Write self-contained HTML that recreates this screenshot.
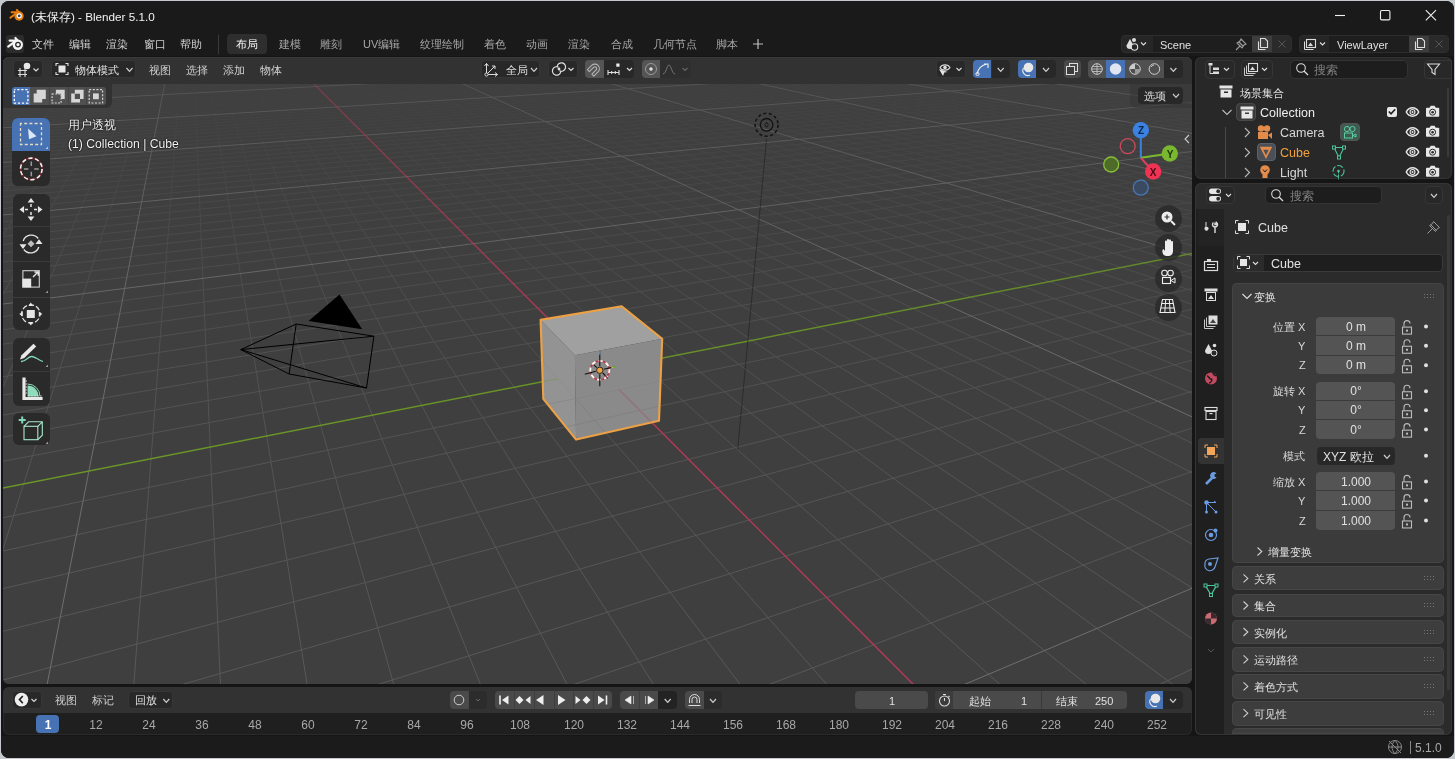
<!DOCTYPE html><html><head><meta charset="utf-8"><style>
html,body{margin:0;padding:0;width:1455px;height:759px;overflow:hidden;background:#c5c8cc;}
.a{position:absolute;}
.t{position:absolute;white-space:nowrap;font-family:"Liberation Sans",sans-serif;will-change:transform;}
</style></head><body>
<div class="a" style="left:1.0px;top:1.0px;width:1453.0px;height:757.0px;background:#151515;border-radius:8px;"></div>
<div class="a" style="left:1.0px;top:1.0px;width:1453.0px;height:55.3px;background:#1a1a1a;border-radius:8px 8px 0 0;"></div>
<div class="a" style="left:1.0px;top:736.0px;width:1453.0px;height:22.0px;background:#1b1b1b;border-radius:0 0 8px 8px;"></div>
<svg class="a" style="left:0px;top:0px;" width="40" height="30" viewBox="0 0 40 30"><g transform="translate(19,16) scale(0.9)"><path d="M-0.4 -4.6L-2.4 -6.8M-1 -4.2H-8.2M-4.2 -2.2L-9.6 1.9" stroke="#e87d0d" stroke-width="2.2" stroke-linecap="round"/><circle cx="0" cy="0" r="5.2" fill="#e87d0d"/><circle cx="0.2" cy="-0.2" r="2.9" fill="#fff"/><circle cx="0.2" cy="-0.2" r="1.6" fill="#2d4a6a"/></g></svg>
<div class="t" style="left:31.0px;top:6.5px;height:20px;line-height:20px;font-size:11.7px;color:#f2f2f2;">(未保存) - Blender 5.1.0</div>
<svg class="a" style="left:1330px;top:5px;" width="120" height="22" viewBox="0 0 120 22"><path d="M5 10.5H15" stroke="#f0f0f0" stroke-width="1.1"/><rect x="50.5" y="5.5" width="9.4" height="9.4" rx="1.2" fill="none" stroke="#f0f0f0" stroke-width="1.1"/><path d="M95.8 5.2L106 15.4M106 5.2L95.8 15.4" stroke="#f0f0f0" stroke-width="1.1"/></svg>
<div class="a" style="left:6.0px;top:35.0px;width:18.0px;height:18.0px;background:#2c2c2c;border-radius:3px;"></div>
<svg class="a" style="left:4px;top:32px;" width="24" height="24" viewBox="0 0 24 24"><g transform="translate(13.8,12.8) scale(1.0)"><path d="M-0.4 -4.6L-2.4 -6.8M-1 -4.2H-8.2M-4.2 -2.2L-9.6 1.9" stroke="#f4f4f4" stroke-width="2.2" stroke-linecap="round"/><circle cx="0" cy="0" r="5.2" fill="#f4f4f4"/><circle cx="0.2" cy="-0.2" r="2.9" fill="#2a2a2a"/><circle cx="0.2" cy="-0.2" r="1.6" fill="#f4f4f4"/></g></svg>
<div class="t" style="left:32.2px;top:34.0px;height:20px;line-height:20px;font-size:11px;color:#d0d0d0;">文件</div>
<div class="t" style="left:69.3px;top:34.0px;height:20px;line-height:20px;font-size:11px;color:#d0d0d0;">编辑</div>
<div class="t" style="left:106.4px;top:34.0px;height:20px;line-height:20px;font-size:11px;color:#d0d0d0;">渲染</div>
<div class="t" style="left:143.5px;top:34.0px;height:20px;line-height:20px;font-size:11px;color:#d0d0d0;">窗口</div>
<div class="t" style="left:179.8px;top:34.0px;height:20px;line-height:20px;font-size:11px;color:#d0d0d0;">帮助</div>
<div class="a" style="left:218.0px;top:35.0px;width:1.0px;height:19.0px;background:#3a3a3a;"></div>
<div class="a" style="left:227.0px;top:34.3px;width:40.0px;height:19.7px;background:#2e2e2e;border-radius:4px;"></div>
<div class="t" style="left:235.7px;top:34.0px;height:20px;line-height:20px;font-size:11px;color:#ffffff;">布局</div>
<div class="t" style="left:278.6px;top:34.0px;height:20px;line-height:20px;font-size:11px;color:#a8a8a8;">建模</div>
<div class="t" style="left:319.8px;top:34.0px;height:20px;line-height:20px;font-size:11px;color:#a8a8a8;">雕刻</div>
<div class="t" style="left:362.7px;top:34.0px;height:20px;line-height:20px;font-size:11px;color:#a8a8a8;">UV编辑</div>
<div class="t" style="left:420.4px;top:34.0px;height:20px;line-height:20px;font-size:11px;color:#a8a8a8;">纹理绘制</div>
<div class="t" style="left:484.0px;top:34.0px;height:20px;line-height:20px;font-size:11px;color:#a8a8a8;">着色</div>
<div class="t" style="left:526.0px;top:34.0px;height:20px;line-height:20px;font-size:11px;color:#a8a8a8;">动画</div>
<div class="t" style="left:568.0px;top:34.0px;height:20px;line-height:20px;font-size:11px;color:#a8a8a8;">渲染</div>
<div class="t" style="left:610.5px;top:34.0px;height:20px;line-height:20px;font-size:11px;color:#a8a8a8;">合成</div>
<div class="t" style="left:652.6px;top:34.0px;height:20px;line-height:20px;font-size:11px;color:#a8a8a8;">几何节点</div>
<div class="t" style="left:716.0px;top:34.0px;height:20px;line-height:20px;font-size:11px;color:#a8a8a8;">脚本</div>
<svg class="a" style="left:750px;top:36px;" width="16" height="16" viewBox="0 0 16 16"><path d="M8 3V13M3 8H13" stroke="#bdbdbd" stroke-width="1.2"/></svg>
<div class="a" style="left:1121.4px;top:35.1px;width:170.7px;height:17.8px;background:#262626;border-radius:4px;border:1px solid #2e2e2e;box-sizing:border-box;"></div>
<div class="a" style="left:1152.7px;top:36.0px;width:99.6px;height:16.0px;background:#1e1e1e;"></div>
<div class="a" style="left:1252.3px;top:36.0px;width:20.1px;height:16.0px;background:#3d3d3d;"></div>
<div class="a" style="left:1272.4px;top:36.0px;width:18.6px;height:16.0px;background:#2a2a2a;border-radius:0 3px 3px 0;"></div>
<div class="t" style="left:1159.8px;top:34.5px;height:20px;line-height:20px;font-size:11px;color:#e0e0e0;">Scene</div>
<div class="a" style="left:1298.5px;top:35.1px;width:150.6px;height:17.8px;background:#262626;border-radius:4px;border:1px solid #2e2e2e;box-sizing:border-box;"></div>
<div class="a" style="left:1329.4px;top:36.0px;width:79.9px;height:16.0px;background:#1e1e1e;"></div>
<div class="a" style="left:1409.3px;top:36.0px;width:19.7px;height:16.0px;background:#3d3d3d;"></div>
<div class="a" style="left:1429.0px;top:36.0px;width:19.0px;height:16.0px;background:#2a2a2a;border-radius:0 3px 3px 0;"></div>
<div class="t" style="left:1337.2px;top:34.5px;height:20px;line-height:20px;font-size:11px;color:#e0e0e0;">ViewLayer</div>
<svg class="a" style="left:1124px;top:36px;" width="30" height="16" viewBox="0 0 30 16"><path d="M6 3 L2.5 9.5 A3.5 3.5 0 0 0 9.5 9.5Z" fill="#ddd"/><circle cx="10" cy="4" r="2" fill="#ddd"/><circle cx="10.5" cy="11" r="3.2" fill="#262626" stroke="#ddd" stroke-width="1.1"/><path d="M17 6.5L19.5 9L22 6.5" fill="none" stroke="#ddd" stroke-width="1.1"/></svg>
<svg class="a" style="left:1233px;top:36px;" width="16" height="16" viewBox="0 0 16 16"><path d="M3 14L7 10M6 6L10 10M8 3L13 8L11 9L9 12L4 7L7 5Z" fill="none" stroke="#9a9a9a" stroke-width="1.1"/></svg>
<svg class="a" style="left:1254px;top:36px;" width="16" height="16" viewBox="0 0 16 16"><path d="M4.5 5.5V13.5H11.5" fill="none" stroke="#ddd" stroke-width="1.1"/><path d="M6.5 2.5H11L13.5 5V11.5H6.5Z" fill="none" stroke="#ddd" stroke-width="1.1"/></svg>
<svg class="a" style="left:1411px;top:36px;" width="16" height="16" viewBox="0 0 16 16"><path d="M4.5 5.5V13.5H11.5" fill="none" stroke="#ddd" stroke-width="1.1"/><path d="M6.5 2.5H11L13.5 5V11.5H6.5Z" fill="none" stroke="#ddd" stroke-width="1.1"/></svg>
<svg class="a" style="left:1274px;top:36px;" width="16" height="16" viewBox="0 0 16 16"><path d="M4.5 4.5L11.5 11.5M11.5 4.5L4.5 11.5" stroke="#555" stroke-width="1"/></svg>
<svg class="a" style="left:1431px;top:36px;" width="16" height="16" viewBox="0 0 16 16"><path d="M4.5 4.5L11.5 11.5M11.5 4.5L4.5 11.5" stroke="#555" stroke-width="1"/></svg>
<svg class="a" style="left:1301px;top:36px;" width="30" height="16" viewBox="0 0 30 16"><rect x="5.5" y="3.5" width="9" height="8" fill="none" stroke="#ddd" stroke-width="1.1"/><path d="M3.5 5.5V13.5H12.5" fill="none" stroke="#ddd" stroke-width="1"/><path d="M7 10L9.5 6.5L12 10Z" fill="#ddd"/><path d="M19 6.5L21.5 9L24 6.5" fill="none" stroke="#ddd" stroke-width="1.1"/></svg>
<div class="a" style="left:3px;top:57px;width:1189px;height:627px;border-radius:6px;overflow:hidden;background:#3f3f3f"><svg width="1189" height="627" style="position:absolute;left:0;top:0"><rect width="1189" height="627" fill="#3f3f3f"/><defs><linearGradient id="g1" gradientUnits="userSpaceOnUse" x1="0" y1="0" x2="0" y2="627"><stop offset="0.000" stop-color="#fff" stop-opacity="0.022"/><stop offset="0.043" stop-color="#fff" stop-opacity="0.063"/><stop offset="0.087" stop-color="#fff" stop-opacity="0.116"/><stop offset="0.130" stop-color="#fff" stop-opacity="0.172"/><stop offset="0.174" stop-color="#fff" stop-opacity="0.230"/><stop offset="0.217" stop-color="#fff" stop-opacity="0.287"/><stop offset="0.261" stop-color="#fff" stop-opacity="0.340"/><stop offset="0.304" stop-color="#fff" stop-opacity="0.391"/><stop offset="0.348" stop-color="#fff" stop-opacity="0.438"/><stop offset="0.391" stop-color="#fff" stop-opacity="0.481"/><stop offset="0.435" stop-color="#fff" stop-opacity="0.520"/><stop offset="0.478" stop-color="#fff" stop-opacity="0.555"/><stop offset="0.522" stop-color="#fff" stop-opacity="0.586"/><stop offset="0.565" stop-color="#fff" stop-opacity="0.615"/><stop offset="0.609" stop-color="#fff" stop-opacity="0.640"/><stop offset="0.652" stop-color="#fff" stop-opacity="0.662"/><stop offset="0.696" stop-color="#fff" stop-opacity="0.682"/><stop offset="0.739" stop-color="#fff" stop-opacity="0.700"/><stop offset="0.783" stop-color="#fff" stop-opacity="0.715"/><stop offset="0.826" stop-color="#fff" stop-opacity="0.729"/><stop offset="0.870" stop-color="#fff" stop-opacity="0.742"/><stop offset="0.913" stop-color="#fff" stop-opacity="0.753"/><stop offset="0.957" stop-color="#fff" stop-opacity="0.763"/><stop offset="1.000" stop-color="#fff" stop-opacity="0.773"/></linearGradient><linearGradient id="g10" gradientUnits="userSpaceOnUse" x1="0" y1="0" x2="0" y2="627"><stop offset="0.000" stop-color="#fff" stop-opacity="0.341"/><stop offset="0.043" stop-color="#fff" stop-opacity="0.422"/><stop offset="0.087" stop-color="#fff" stop-opacity="0.496"/><stop offset="0.130" stop-color="#fff" stop-opacity="0.564"/><stop offset="0.174" stop-color="#fff" stop-opacity="0.625"/><stop offset="0.217" stop-color="#fff" stop-opacity="0.680"/><stop offset="0.261" stop-color="#fff" stop-opacity="0.729"/><stop offset="0.304" stop-color="#fff" stop-opacity="0.773"/><stop offset="0.348" stop-color="#fff" stop-opacity="0.810"/><stop offset="0.391" stop-color="#fff" stop-opacity="0.843"/><stop offset="0.435" stop-color="#fff" stop-opacity="0.871"/><stop offset="0.478" stop-color="#fff" stop-opacity="0.895"/><stop offset="0.522" stop-color="#fff" stop-opacity="0.915"/><stop offset="0.565" stop-color="#fff" stop-opacity="0.932"/><stop offset="0.609" stop-color="#fff" stop-opacity="0.946"/><stop offset="0.652" stop-color="#fff" stop-opacity="0.957"/><stop offset="0.696" stop-color="#fff" stop-opacity="0.967"/><stop offset="0.739" stop-color="#fff" stop-opacity="0.974"/><stop offset="0.783" stop-color="#fff" stop-opacity="0.980"/><stop offset="0.826" stop-color="#fff" stop-opacity="0.985"/><stop offset="0.870" stop-color="#fff" stop-opacity="0.988"/><stop offset="0.913" stop-color="#fff" stop-opacity="0.991"/><stop offset="0.957" stop-color="#fff" stop-opacity="0.993"/><stop offset="1.000" stop-color="#fff" stop-opacity="0.995"/></linearGradient><mask id="m1" maskUnits="userSpaceOnUse" x="0" y="0" width="1189" height="627"><rect width="1189" height="627" fill="url(#g1)"/></mask><mask id="m10" maskUnits="userSpaceOnUse" x="0" y="0" width="1189" height="627"><rect width="1189" height="627" fill="url(#g10)"/></mask></defs><g id="gl"><path d="M-2.0 -1.5L11.0 -2.0M-2.0 -0.6L37.5 -2.0M-2.0 0.4L64.0 -2.0M-2.0 1.4L90.5 -2.0M-2.0 3.4L143.5 -2.0M-2.0 4.5L170.0 -2.0M-2.0 5.5L196.4 -2.0M-2.0 6.6L222.8 -2.0M-2.0 7.7L249.3 -2.0M-2.0 8.9L275.7 -2.0M-2.0 10.1L302.1 -2.0M-2.0 11.3L328.5 -2.0M-2.0 12.5L354.8 -2.0M-2.0 15.0L407.5 -2.0M-2.0 16.3L433.9 -2.0M-2.0 17.6L460.2 -2.0M-2.0 19.0L486.5 -2.0M-2.0 20.4L512.8 -2.0M-2.0 21.8L539.1 -2.0M-2.0 23.3L565.4 -2.0M-2.0 24.8L591.6 -2.0M-2.0 26.4L617.9 -2.0M-2.0 29.6L670.3 -2.0M-2.0 31.2L696.5 -2.0M-2.0 32.9L722.7 -2.0M-2.0 34.7L748.9 -2.0M-2.0 36.5L775.1 -2.0M-2.0 38.4L801.3 -2.0M-2.0 40.3L827.4 -2.0M-2.0 42.2L853.5 -2.0M-2.0 44.2L879.7 -2.0M-2.0 48.4L931.9 -2.0M-2.0 50.6L958.0 -2.0M-2.0 52.9L984.0 -2.0M-2.0 55.2L1010.1 -2.0M-2.0 57.6L1036.2 -2.0M-2.0 60.1L1062.2 -2.0M-2.0 62.7L1088.2 -2.0M-2.0 65.3L1114.2 -2.0M-2.0 68.1L1140.2 -2.0M-2.0 73.8L1191.0 -1.9M-2.0 76.9L1191.0 -0.2M-2.0 80.0L1191.0 1.5M-2.0 83.3L1191.0 3.3M-2.0 86.6L1191.0 5.2M-2.0 90.1L1191.0 7.1M-2.0 93.8L1191.0 9.1M-2.0 97.6L1191.0 11.2M-2.0 101.5L1191.0 13.4M-2.0 109.9L1191.0 18.0M-2.0 114.3L1191.0 20.5M-2.0 119.0L1191.0 23.1M-2.0 123.8L1191.0 25.8M-2.0 128.9L1191.0 28.6M-2.0 134.2L1191.0 31.5M-2.0 139.8L1191.0 34.6M-2.0 145.6L1191.0 37.8M-2.0 151.7L1191.0 41.2M-2.0 165.0L1191.0 48.6M-2.0 172.1L1191.0 52.5M-2.0 179.7L1191.0 56.7M-2.0 187.7L1191.0 61.1M-2.0 196.1L1191.0 65.8M-2.0 205.1L1191.0 70.8M-2.0 214.7L1191.0 76.1M-2.0 224.9L1191.0 81.7M-2.0 235.7L1191.0 87.7M-2.0 259.8L1191.0 101.1M-2.0 273.1L1191.0 108.5M-2.0 287.5L1191.0 116.5M-2.0 303.1L1191.0 125.1M-2.0 320.0L1191.0 134.4M-2.0 338.4L1191.0 144.6M-2.0 358.4L1191.0 155.7M-2.0 380.4L1191.0 167.9M-2.0 404.6L1191.0 181.3M-2.0 461.2L1191.0 212.6M-2.0 494.5L1191.0 231.1M-2.0 532.1L1191.0 251.9M-2.0 574.8L1191.0 275.6M-2.0 623.6L1191.0 302.6M174.1 629.0L1191.0 333.9M370.2 629.0L1191.0 370.5M566.2 629.0L1191.0 413.9M762.0 629.0L1191.0 466.2M1153.5 629.0L1191.0 611.1M6.2 -2.0L-2.0 2.4M17.8 -2.0L-2.0 9.3M29.3 -2.0L-2.0 17.2M40.8 -2.0L-2.0 26.3M63.8 -2.0L-2.0 49.7M75.3 -2.0L-2.0 65.1M86.9 -2.0L-2.0 84.0M98.4 -2.0L-2.0 107.9M109.9 -2.0L-2.0 138.9M121.4 -2.0L-2.0 181.0M132.9 -2.0L-2.0 241.2M144.4 -2.0L-2.0 334.5M155.9 -2.0L-2.0 498.6M178.8 -2.0L130.7 629.0M190.3 -2.0L217.5 629.0M201.8 -2.0L304.4 629.0M213.3 -2.0L391.2 629.0M224.8 -2.0L478.1 629.0M236.3 -2.0L564.9 629.0M247.7 -2.0L651.6 629.0M259.2 -2.0L738.4 629.0M270.7 -2.0L825.2 629.0M293.6 -2.0L998.6 629.0M305.1 -2.0L1085.3 629.0M316.5 -2.0L1172.0 629.0M328.0 -2.0L1191.0 583.1M339.5 -2.0L1191.0 532.2M350.9 -2.0L1191.0 488.4M362.4 -2.0L1191.0 450.3M373.8 -2.0L1191.0 416.8M385.3 -2.0L1191.0 387.2M408.1 -2.0L1191.0 337.1M419.6 -2.0L1191.0 315.8M431.0 -2.0L1191.0 296.5M442.5 -2.0L1191.0 278.8M453.9 -2.0L1191.0 262.7M465.3 -2.0L1191.0 248.0M476.8 -2.0L1191.0 234.4M488.2 -2.0L1191.0 221.8M499.6 -2.0L1191.0 210.1M522.4 -2.0L1191.0 189.2M533.9 -2.0L1191.0 179.7M545.3 -2.0L1191.0 170.9M556.7 -2.0L1191.0 162.6M568.1 -2.0L1191.0 154.8M579.5 -2.0L1191.0 147.5M590.9 -2.0L1191.0 140.6M602.3 -2.0L1191.0 134.0M613.7 -2.0L1191.0 127.8M636.5 -2.0L1191.0 116.4M647.9 -2.0L1191.0 111.1M659.3 -2.0L1191.0 106.1M670.7 -2.0L1191.0 101.3M682.1 -2.0L1191.0 96.7M693.4 -2.0L1191.0 92.3M704.8 -2.0L1191.0 88.1M716.2 -2.0L1191.0 84.1M727.6 -2.0L1191.0 80.3M750.3 -2.0L1191.0 73.1M761.7 -2.0L1191.0 69.7M773.1 -2.0L1191.0 66.5M784.4 -2.0L1191.0 63.3M795.8 -2.0L1191.0 60.3M807.2 -2.0L1191.0 57.4M818.5 -2.0L1191.0 54.6M829.9 -2.0L1191.0 51.9M841.2 -2.0L1191.0 49.3M863.9 -2.0L1191.0 44.4M875.3 -2.0L1191.0 42.1M886.6 -2.0L1191.0 39.8M898.0 -2.0L1191.0 37.6M909.3 -2.0L1191.0 35.5M920.6 -2.0L1191.0 33.4M932.0 -2.0L1191.0 31.4M943.3 -2.0L1191.0 29.5M954.6 -2.0L1191.0 27.6M977.3 -2.0L1191.0 24.0M988.6 -2.0L1191.0 22.3M999.9 -2.0L1191.0 20.6M1011.2 -2.0L1191.0 18.9M1022.6 -2.0L1191.0 17.4M1033.9 -2.0L1191.0 15.8M1045.2 -2.0L1191.0 14.3M1056.5 -2.0L1191.0 12.9M1067.8 -2.0L1191.0 11.4M1090.4 -2.0L1191.0 8.7M1101.7 -2.0L1191.0 7.4M1113.0 -2.0L1191.0 6.1M1124.3 -2.0L1191.0 4.8M1135.6 -2.0L1191.0 3.6M1146.9 -2.0L1191.0 2.4M1158.2 -2.0L1191.0 1.2M1169.5 -2.0L1191.0 0.1M1180.7 -2.0L1191.0 -1.0" stroke="#606060" stroke-width="1" mask="url(#m1)"/><path d="M-2.0 2.4L117.0 -2.0M-2.0 13.7L381.2 -2.0M-2.0 27.9L644.1 -2.0M-2.0 46.3L905.8 -2.0M-2.0 70.9L1166.2 -2.0M-2.0 105.6L1191.0 15.7M-2.0 158.2L1191.0 44.8M-2.0 247.3L1191.0 94.2M957.8 629.0L1191.0 530.4M52.3 -2.0L-2.0 37.0M167.4 -2.0L43.8 629.0M396.7 -2.0L1191.0 360.8M511.0 -2.0L1191.0 199.3M625.1 -2.0L1191.0 122.0M739.0 -2.0L1191.0 76.6M852.6 -2.0L1191.0 46.8M966.0 -2.0L1191.0 25.7M1079.1 -2.0L1191.0 10.0" stroke="#707070" stroke-width="1" mask="url(#m10)"/><g mask="url(#m10)"><path d="M282.1 -2.0L911.9 629.0" stroke="#b23a56" stroke-width="1.5"/><path d="M-2.0 431.4L1191.0 196.1" stroke="#6c9a26" stroke-width="1.5"/></g></g><line x1="763.6" y1="81.8" x2="734.7" y2="392.5" stroke="#1a1a1a" stroke-opacity="0.5" stroke-width="1"/><circle cx="763.6" cy="67.8" r="6.3" fill="none" stroke="#111" stroke-width="1.3"/><circle cx="763.6" cy="67.8" r="11.5" fill="none" stroke="#151515" stroke-width="1.6" stroke-dasharray="3.2 2.4"/><path d="M763.6 65.3L765.4 67.8L763.6 70.3L761.8 67.8Z" fill="none" stroke="#111" stroke-width="0.9"/><path d="M293.2,267.0L370.9,279.2L363.5,331.0L286.1,317.0ZM237.8,292.6L293.2,267.0M237.8,292.6L370.9,279.2M237.8,292.6L363.5,331.0M237.8,292.6L286.1,317.0" fill="none" stroke="#000" stroke-width="1" stroke-linejoin="round"/><path d="M336.5,237.4L305.6,264.0L359.2,272.3Z" fill="#000"/><path d="M537.6,262.9L618.7,249.3L659.2,281.8L571.9,298.2Z" fill="#a0a0a0"/><path d="M537.6,262.9L571.9,298.2L573.1,382.6L540.3,341.9Z" fill="#939393"/><path d="M571.9,298.2L659.2,281.8L656.0,363.7L573.1,382.6Z" fill="#8a8a8a"/><clipPath id="cc"><path d="M539.0,303.3L572.5,341.5L657.6,323.8L656.0,363.7L573.1,382.6L540.3,341.9Z"/></clipPath><g clip-path="url(#cc)" opacity="0.3"><use href="#gl"/></g><path d="M537.6,262.9L618.7,249.3L659.2,281.8L656.0,363.7L573.1,382.6L540.3,341.9Z" fill="none" stroke="#eda145" stroke-width="2.1" stroke-linejoin="round"/><circle cx="596.8" cy="313.3" r="9.5" fill="none" stroke="#b8404c" stroke-width="1.8"/><circle cx="596.8" cy="313.3" r="9.5" fill="none" stroke="#fff" stroke-width="1.8" stroke-dasharray="4.2 3.26" stroke-dashoffset="1.5"/><path d="M596.8 294.3V309.3M596.8 317.3V329.3M581.8 317.3L592.8 314.3M600.8 312.3L611.8 309.8M590.8 307.8L593.8 310.6M599.8 316.0L604.8 321.3" stroke="#111" stroke-width="1.1"/><path d="M596.8 294.3V297.8" stroke="#6a8fd0" stroke-width="1.3"/><path d="M608.3 310.5L611.8 309.8" stroke="#9ad040" stroke-width="1.3"/><path d="M602.3 318.8L604.8 321.3" stroke="#c04050" stroke-width="1.3"/><circle cx="596.8" cy="313.3" r="3.2" fill="#f0a33f" stroke="#1a1a1a" stroke-width="0.9"/></svg></div>
<div class="a" style="left:3.0px;top:57.0px;width:1189.0px;height:27.0px;background:#323232;border-radius:6px 6px 0 0;box-shadow:inset 0 1px 0 #3a3a3a;"></div>
<div class="a" style="left:13.4px;top:60.3px;width:29.9px;height:17.5px;background:#282828;border-radius:4px;box-sizing:border-box;border:1px solid #363636;"></div>
<svg class="a" style="left:14px;top:60px;" width="30" height="18" viewBox="0 0 30 18"><path d="M4 10.5H13M4 14.5H13M6 8V17M11 8V17" stroke="#ddd" stroke-width="1.1"/><circle cx="13" cy="6" r="3.3" fill="#e8e8e8"/><path d="M19.5 8.5L22 11L24.5 8.5" fill="none" stroke="#ddd" stroke-width="1.1"/></svg>
<div class="a" style="left:50.5px;top:60.3px;width:85.5px;height:17.5px;background:#282828;border-radius:4px;box-sizing:border-box;border:1px solid #363636;"></div>
<svg class="a" style="left:53px;top:60px;" width="20" height="18" viewBox="0 0 20 18"><path d="M3 6V3.5H5.5M12.5 3.5H15V6M15 12V14.5H12.5M5.5 14.5H3V12" fill="none" stroke="#ddd" stroke-width="1.1"/><rect x="5.5" y="5.5" width="7" height="7" fill="#e6e6e6"/></svg>
<div class="t" style="left:75.3px;top:59.5px;height:20px;line-height:20px;font-size:11px;color:#e0e0e0;">物体模式</div>
<svg class="a" style="left:123px;top:63px;" width="12" height="12" viewBox="0 0 12 12"><path d="M3.5 5.0 L6.5 8.3 L9.5 5.0" fill="none" stroke="#cfcfcf" stroke-width="1.2"/></svg>
<div class="t" style="left:149.0px;top:59.5px;height:20px;line-height:20px;font-size:11px;color:#d0d0d0;">视图</div>
<div class="t" style="left:186.2px;top:59.5px;height:20px;line-height:20px;font-size:11px;color:#d0d0d0;">选择</div>
<div class="t" style="left:223.0px;top:59.5px;height:20px;line-height:20px;font-size:11px;color:#d0d0d0;">添加</div>
<div class="t" style="left:259.8px;top:59.5px;height:20px;line-height:20px;font-size:11px;color:#d0d0d0;">物体</div>
<div class="a" style="left:481.0px;top:60.3px;width:59.3px;height:17.5px;background:#282828;border-radius:4px;box-sizing:border-box;border:1px solid #363636;"></div>
<svg class="a" style="left:482px;top:60px;" width="20" height="18" viewBox="0 0 20 18"><path d="M4.5 3.5V14.5H15.5M4.5 14.5L13 6M10 6H13V9M4.5 3.5L2.5 6M4.5 3.5L6.5 6M15.5 14.5L13 12.5M15.5 14.5L13 16.5" fill="none" stroke="#ddd" stroke-width="1"/><circle cx="4.5" cy="14.5" r="1.6" fill="#303030" stroke="#ddd"/></svg>
<div class="t" style="left:506.0px;top:59.5px;height:20px;line-height:20px;font-size:11px;color:#e0e0e0;">全局</div>
<svg class="a" style="left:528px;top:63px;" width="12" height="12" viewBox="0 0 12 12"><path d="M3.0 5.0 L6.0 8.3 L9.0 5.0" fill="none" stroke="#cfcfcf" stroke-width="1.2"/></svg>
<div class="a" style="left:548.2px;top:60.3px;width:29.6px;height:17.5px;background:#282828;border-radius:4px;box-sizing:border-box;border:1px solid #363636;"></div>
<svg class="a" style="left:550px;top:60px;" width="30" height="18" viewBox="0 0 30 18"><path d="M8.5 7.2A4.2 4.2 0 1 0 10.8 11.5M9.5 10.8A4.2 4.2 0 1 0 7.2 6.5" fill="none" stroke="#e0e0e0" stroke-width="1.2"/><circle cx="9" cy="9" r="1.4" fill="#e0e0e0"/><path d="M18.5 8L21 10.5L23.5 8" fill="none" stroke="#ddd" stroke-width="1.1"/></svg>
<div class="a" style="left:585.4px;top:60.3px;width:18.2px;height:17.5px;background:#555555;border-radius:4px 0 0 4px;"></div>
<div class="a" style="left:603.6px;top:60.3px;width:30.8px;height:17.5px;background:#282828;border-radius:0 4px 4px 0;"></div>
<svg class="a" style="left:585px;top:60px;" width="20" height="18" viewBox="0 0 20 18"><g transform="rotate(45 9.5 9)"><path d="M5 14.5V8.5A4.5 4.5 0 0 1 14 8.5V14.5H11.3V8.5A1.8 1.8 0 0 0 7.7 8.5V14.5Z" fill="none" stroke="#b4b4b4" stroke-width="1.1" stroke-linejoin="round"/></g></svg>
<svg class="a" style="left:604px;top:60px;" width="32" height="18" viewBox="0 0 32 18"><path d="M4 12.5H15M4 10V15M7.7 11V14M11.3 11V14M15 10V15" stroke="#e0e0e0" stroke-width="1.1"/><rect x="12.3" y="3.5" width="3.2" height="3.2" fill="#eee"/><path d="M23 8L25.5 10.5L28 8" fill="none" stroke="#ddd" stroke-width="1.2"/></svg>
<div class="a" style="left:642.3px;top:60.3px;width:17.4px;height:17.5px;background:#555555;border-radius:4px 0 0 4px;"></div>
<div class="a" style="left:659.7px;top:60.3px;width:31.6px;height:17.5px;background:#2e2e2e;border-radius:0 4px 4px 0;"></div>
<svg class="a" style="left:642px;top:60px;" width="18" height="18" viewBox="0 0 18 18"><circle cx="9" cy="9" r="5.5" fill="none" stroke="#9a9a9a" stroke-width="1"/><circle cx="9" cy="9" r="1.7" fill="#e6e6e6"/></svg>
<svg class="a" style="left:660px;top:60px;" width="32" height="18" viewBox="0 0 32 18"><path d="M3 14C6 14 7 5 9 5S12 14 15 14" fill="none" stroke="#777" stroke-width="1"/><path d="M22.5 8L25 10.5L27.5 8" fill="none" stroke="#666" stroke-width="1.1"/></svg>
<div class="a" style="left:936.0px;top:60.3px;width:29.7px;height:17.5px;background:#282828;border-radius:4px;box-sizing:border-box;border:1px solid #363636;"></div>
<svg class="a" style="left:936px;top:60px;" width="30" height="18" viewBox="0 0 30 18"><path d="M4 7.5C6 4 12 4 14 7.5C12 11 6 11 4 7.5Z" fill="none" stroke="#ddd" stroke-width="1.1"/><circle cx="9" cy="7.5" r="1.8" fill="#ddd"/><path d="M3 9L7 16L8.3 12.5L11.5 12Z" fill="#e6e6e6"/><path d="M20.5 8L23 10.5L25.5 8" fill="none" stroke="#ddd" stroke-width="1.1"/></svg>
<div class="a" style="left:972.9px;top:60.3px;width:18.6px;height:17.5px;background:#4772b3;border-radius:4px 0 0 4px;"></div>
<div class="a" style="left:991.5px;top:60.3px;width:18.3px;height:17.5px;background:#282828;border-radius:0 4px 4px 0;"></div>
<svg class="a" style="left:973px;top:60px;" width="19" height="18" viewBox="0 0 19 18"><path d="M4 14C5 9 9 5 14 4M11 4H15V8" fill="none" stroke="#eee" stroke-width="1.1"/><circle cx="4.5" cy="14" r="1.6" fill="none" stroke="#eee"/></svg>
<svg class="a" style="left:994px;top:63px;" width="12" height="12" viewBox="0 0 12 12"><path d="M3.7 5.0 L6.7 8.3 L9.7 5.0" fill="none" stroke="#cfcfcf" stroke-width="1.2"/></svg>
<div class="a" style="left:1017.9px;top:60.3px;width:18.4px;height:17.5px;background:#4772b3;border-radius:4px 0 0 4px;"></div>
<div class="a" style="left:1036.3px;top:60.3px;width:19.4px;height:17.5px;background:#282828;border-radius:0 4px 4px 0;"></div>
<svg class="a" style="left:1018px;top:60px;" width="19" height="18" viewBox="0 0 19 18"><circle cx="10.5" cy="7.5" r="4.8" fill="#e8e8e8"/><path d="M5.5 8A5 5 0 0 0 12 15" fill="none" stroke="#eee" stroke-width="1.1"/></svg>
<svg class="a" style="left:1040px;top:63px;" width="12" height="12" viewBox="0 0 12 12"><path d="M3.0 5.0 L6.0 8.3 L9.0 5.0" fill="none" stroke="#cfcfcf" stroke-width="1.2"/></svg>
<div class="a" style="left:1063.7px;top:60.3px;width:17.0px;height:17.5px;background:#484848;border-radius:4px;"></div>
<svg class="a" style="left:1063px;top:60px;" width="18" height="18" viewBox="0 0 18 18"><rect x="6.5" y="3.5" width="8" height="8" fill="none" stroke="#ddd" stroke-width="1"/><rect x="3.5" y="6.5" width="8" height="8" fill="#3c3c3c" stroke="#ddd" stroke-width="1"/></svg>
<div class="a" style="left:1088.2px;top:60.3px;width:18.0px;height:17.5px;background:#505050;border-radius:4px 0 0 4px;"></div>
<div class="a" style="left:1106.2px;top:60.3px;width:18.9px;height:17.5px;background:#4772b3;"></div>
<div class="a" style="left:1125.1px;top:60.3px;width:19.9px;height:17.5px;background:#505050;"></div>
<div class="a" style="left:1145.0px;top:60.3px;width:18.9px;height:17.5px;background:#505050;"></div>
<div class="a" style="left:1163.9px;top:60.3px;width:18.9px;height:17.5px;background:#282828;border-radius:0 4px 4px 0;"></div>
<svg class="a" style="left:1088px;top:60px;" width="95" height="18" viewBox="0 0 95 18"><circle cx="9" cy="9" r="5.3" fill="none" stroke="#ccc" stroke-width="1"/><path d="M3.7 9H14.3M9 3.7V14.3M4.5 6.5H13.5M4.5 11.5H13.5" stroke="#ccc" stroke-width="0.8"/><circle cx="27.6" cy="9" r="5.8" fill="#dfe6f2"/><circle cx="47" cy="9" r="5.3" fill="none" stroke="#ccc" stroke-width="1"/><path d="M47 9V3.7A5.3 5.3 0 0 0 41.7 9Z" fill="#ccc"/><path d="M47 9H52.3A5.3 5.3 0 0 1 47 14.3Z" fill="#999"/><circle cx="66.4" cy="9" r="5.3" fill="none" stroke="#ccc" stroke-width="1"/><path d="M63 7A3.5 3.5 0 0 1 66 5" fill="none" stroke="#ccc" stroke-width="1"/></svg>
<svg class="a" style="left:1167px;top:63px;" width="12" height="12" viewBox="0 0 12 12"><path d="M3.4 5.0 L6.4 8.3 L9.4 5.0" fill="none" stroke="#cfcfcf" stroke-width="1.2"/></svg>
<div class="a" style="left:3.0px;top:84.0px;width:109.4px;height:23.5px;background:#323232;border-radius:0 0 6px 0;"></div>
<div class="a" style="left:12.1px;top:86.8px;width:18.2px;height:18.2px;background:#4772b3;border-radius:3px 0 0 3px;"></div>
<div class="a" style="left:30.3px;top:86.8px;width:75.3px;height:18.2px;background:#505050;border-radius:0 3px 3px 0;"></div>
<div class="a" style="left:48.7px;top:86.8px;width:1.0px;height:18.2px;background:#434343;"></div>
<div class="a" style="left:67.6px;top:86.8px;width:1.0px;height:18.2px;background:#434343;"></div>
<div class="a" style="left:86.2px;top:86.8px;width:1.0px;height:18.2px;background:#434343;"></div>
<svg class="a" style="left:12px;top:87px;" width="95" height="18" viewBox="0 0 95 18"><rect x="2.3" y="2.6" width="13.6" height="13.6" fill="none" stroke="#fff" stroke-width="1.3" stroke-dasharray="2.2 1.8" stroke-dashoffset="1"/><g transform="translate(18.2,0)"><path d="M3.5 6.5H6.5V2.7H15.6V12H12V15.6H3.5Z" fill="#d6d6d6"/></g><g transform="translate(37.1,0)"><rect x="3" y="7" width="9" height="9" fill="none" stroke="#d6d6d6" stroke-width="1.2" stroke-dasharray="1.8 1.4"/><path d="M6.8 2.7H15.6V12H12V6.8H6.8Z" fill="#d6d6d6"/></g><g transform="translate(56,0)"><path d="M6.8 2.7H15.6V12H12V6.8H6.8Z" fill="#d6d6d6"/><path d="M3.2 6.6H6.8V12H12V15.6H3.2Z" fill="#d6d6d6"/></g><g transform="translate(74.6,0)"><rect x="2.6" y="2.6" width="13.4" height="13.4" fill="none" stroke="#d6d6d6" stroke-width="1.2" stroke-dasharray="2 1.6"/><rect x="6.4" y="6.4" width="5.8" height="5.8" fill="#d6d6d6"/></g></svg>
<div class="a" style="left:11.9px;top:117.6px;width:38.4px;height:68.4px;background:#2a2a2a;border-radius:6px;"></div>
<div class="a" style="left:11.9px;top:117.6px;width:38.4px;height:33.9px;background:#4772b3;border-radius:6px 6px 0 0;"></div>
<div class="a" style="left:12.8px;top:193.5px;width:37.3px;height:136.5px;background:#2a2a2a;border-radius:6px;"></div>
<div class="a" style="left:12.8px;top:338.3px;width:37.3px;height:67.7px;background:#2a2a2a;border-radius:6px;"></div>
<div class="a" style="left:12.8px;top:413.0px;width:37.3px;height:32.0px;background:#2a2a2a;border-radius:6px;"></div>
<div class="a" style="left:12.8px;top:226.4px;width:37.3px;height:1.0px;background:#3a3a3a;"></div>
<div class="a" style="left:12.8px;top:260.9px;width:37.3px;height:1.0px;background:#3a3a3a;"></div>
<div class="a" style="left:12.8px;top:296.5px;width:37.3px;height:1.0px;background:#3a3a3a;"></div>
<div class="a" style="left:12.8px;top:371.1px;width:37.3px;height:1.0px;background:#3a3a3a;"></div>
<svg class="a" style="left:0px;top:0px;" width="60" height="460" viewBox="0 0 60 460"><rect x="20.5" y="123.5" width="21" height="21" fill="none" stroke="#e6dcc4" stroke-width="1.3" stroke-dasharray="3 2.2" stroke-dashoffset="1.5"/><path d="M28 128.5L36.5 136.3L29 139.3Z" fill="#dbe6f7"/><path d="M45.5 149L48 146.5V149Z" fill="#b8c8e8"/><circle cx="31.3" cy="168.9" r="10.8" fill="none" stroke="#7a2530" stroke-width="1.6"/><circle cx="31.3" cy="168.9" r="10.8" fill="none" stroke="#f0f0f0" stroke-width="1.6" stroke-dasharray="4.2 2.6"/><path d="M31.3 161.5V166M31.3 171.8V176.3M23.9 168.9H28.4M34.2 168.9H38.7" stroke="#9a9a9a" stroke-width="1.5"/><path d="M31 198L27.6 202.6H34.4ZM31 221L27.6 216.4H34.4ZM19.5 209.5L24.1 206.1V212.9ZM42.5 209.5L37.9 206.1V212.9Z" fill="#e6e6e6"/><path d="M31 204V207M31 212V215M25 209.5H28M34 209.5H37" stroke="#e6e6e6" stroke-width="1.5"/><path d="M23.2 241A8.6 8.6 0 0 1 38.2 238.5M38.8 247A8.6 8.6 0 0 1 23.8 249.5" fill="none" stroke="#e6e6e6" stroke-width="1.3"/><path d="M19.5 244.3H26.5L23 249ZM35.5 244H42.5L39 239.3Z" fill="#e6e6e6"/><path d="M31 240.3L34.5 243.8L31 247.3L27.5 243.8Z" fill="#bdbdbd"/><rect x="22.9" y="270.7" width="16.4" height="16.4" fill="none" stroke="#d0d0d0" stroke-width="1.1"/><rect x="22.4" y="278.6" width="8.8" height="8.8" fill="#e6e6e6"/><path d="M33 277L38 272M34.5 272H38.3V275.8" fill="none" stroke="#e6e6e6" stroke-width="1.4"/><path d="M45.5 293L48 290.5V293Z" fill="#999"/><circle cx="30.8" cy="314" r="9.2" fill="none" stroke="#e6e6e6" stroke-width="1.2" stroke-dasharray="5.2 2.1" stroke-dashoffset="2.6"/><rect x="26.8" y="310" width="8" height="8" fill="#e6e6e6"/><path d="M30.8 302.5L28.3 306H33.3ZM30.8 325.5L28.3 322H33.3ZM19.3 314L22.8 311.5V316.5ZM42.3 314L38.8 311.5V316.5Z" fill="#e6e6e6"/><path d="M20 359.5L21.5 355.3L33.5 343.8L36.2 346.4L24.3 358Z" fill="#e8e8e8"/><path d="M21 361.5C26 362 28 356 32 356.5S38 360 43 361.5" fill="none" stroke="#7fd6b8" stroke-width="1.3"/><path d="M45.5 367L48 364.5V367Z" fill="#999"/><path d="M24 377.5V398.5H42.6" fill="none" stroke="#e8e8e8" stroke-width="3.2"/><path d="M27.5 385.5A11 11 0 0 1 38.5 396.5H27.5Z" fill="#8fdcbc"/><path d="M27.5 384A12.5 12.5 0 0 1 40 396.5" fill="none" stroke="#8fdcbc" stroke-width="1"/><path d="M25.6 381H27M25.6 384H27M25.6 387H27M25.6 390H27M25.6 393H27M29 396.7V395.3M32 396.7V395.3M35 396.7V395.3M38 396.7V395.3M41 396.7V395.3" stroke="#e8e8e8" stroke-width="0.9"/><rect x="24" y="426.3" width="13.8" height="13.4" fill="none" stroke="#a8e8cc" stroke-width="1.1"/><path d="M24 426.3L28.5 421.8H42.3V435.2L37.8 439.7M37.8 426.3L42.3 421.8" fill="none" stroke="#a8e8cc" stroke-width="1.1"/><path d="M22.2 416.5V423.5M18.7 420H25.7" stroke="#7fd6b8" stroke-width="2"/><path d="M45.5 444L48 441.5V444Z" fill="#999"/></svg>
<div class="t" style="left:68.0px;top:115.0px;height:20px;line-height:20px;font-size:11.5px;color:#f4f4f4;text-shadow:0 0 2px #000,0 0 1px #000;">用户透视</div>
<div class="t" style="left:68.0px;top:133.5px;height:20px;line-height:20px;font-size:12.2px;color:#f4f4f4;text-shadow:0 0 2px #000,0 0 1px #000;">(1) Collection | Cube</div>
<div class="a" style="left:1129.5px;top:84.0px;width:62.5px;height:24.0px;background:#323232;border-radius:0 0 0 6px;opacity:0.45;"></div>
<div class="a" style="left:1137.5px;top:87.2px;width:45.5px;height:17.3px;background:#282828;border-radius:4px;"></div>
<div class="t" style="left:1144.0px;top:85.5px;height:20px;line-height:20px;font-size:11px;color:#e0e0e0;">选项</div>
<svg class="a" style="left:1170px;top:89px;" width="12" height="12" viewBox="0 0 12 12"><path d="M3.0 5.0 L6.0 8.3 L9.0 5.0" fill="none" stroke="#cfcfcf" stroke-width="1.2"/></svg>
<svg class="a" style="left:1181px;top:131px;" width="12" height="16" viewBox="0 0 12 16"><path d="M8 4L4 8L8 12" fill="none" stroke="#ccc" stroke-width="1.1"/></svg>
<svg class="a" style="left:0px;top:0px;" width="1192" height="330" viewBox="0 0 1192 330"><line x1="1140.8" y1="157.8" x2="1140.8" y2="130.3" stroke="#3b82e0" stroke-width="2"/><line x1="1140.8" y1="157.8" x2="1169.8" y2="153.5" stroke="#7ab830" stroke-width="2"/><line x1="1140.8" y1="157.8" x2="1153.2" y2="171.5" stroke="#e04060" stroke-width="2"/><circle cx="1127.7" cy="146.2" r="7.5" fill="none" stroke="#c94a5c" stroke-width="1.3"/><circle cx="1111.2" cy="164.5" r="7.5" fill="#4f6b2a" stroke="#8ac03a" stroke-width="1.3"/><circle cx="1140.8" cy="187.7" r="7.5" fill="#3a4a60" stroke="#4a78b8" stroke-width="1.2"/><circle cx="1140.8" cy="130.3" r="8.2" fill="#3b82e0"/><circle cx="1169.8" cy="153.5" r="8.2" fill="#7ab830"/><circle cx="1153.2" cy="171.5" r="8.2" fill="#ee3355"/></svg>
<div class="t" style="left:940.8px;width:400px;text-align:center;top:121.3px;height:20px;line-height:20px;font-size:10px;color:#0c2550;font-weight:bold;">Z</div>
<div class="t" style="left:969.8px;width:400px;text-align:center;top:144.5px;height:20px;line-height:20px;font-size:10px;color:#1a3308;font-weight:bold;">Y</div>
<div class="t" style="left:953.2px;width:400px;text-align:center;top:162.5px;height:20px;line-height:20px;font-size:10px;color:#4a0814;font-weight:bold;">X</div>
<div class="a" style="left:1154.8px;top:205.2px;width:27px;height:27px;border-radius:50%;background:rgba(40,40,40,0.75)"></div>
<div class="a" style="left:1154.8px;top:234.2px;width:27px;height:27px;border-radius:50%;background:rgba(40,40,40,0.75)"></div>
<div class="a" style="left:1154.8px;top:264.5px;width:27px;height:27px;border-radius:50%;background:rgba(40,40,40,0.75)"></div>
<div class="a" style="left:1154.8px;top:293.5px;width:27px;height:27px;border-radius:50%;background:rgba(40,40,40,0.75)"></div>
<svg class="a" style="left:1154px;top:204px;" width="30" height="118" viewBox="0 0 30 118"><circle cx="13" cy="13" r="5.5" fill="#eee"/><path d="M10.5 13H15.5M13 10.5V15.5" stroke="#333" stroke-width="1.2"/><path d="M17 17L21 21" stroke="#eee" stroke-width="2"/><path d="M9 50C8 47 8 46 9.5 45L11 47V37.5C11 36 13 36 13 37.5V44V36C13 34.5 15 34.5 15 36V44V36.5C15 35 17 35 17 36.5V44V38C17 36.5 19 36.5 19 38V47C19 50 17 52 14 52S10 51.5 9 50Z" fill="#eee"/><circle cx="10.5" cy="69" r="2.8" fill="none" stroke="#eee" stroke-width="1.1"/><circle cx="16.5" cy="69" r="2.8" fill="none" stroke="#eee" stroke-width="1.1"/><rect x="8.5" y="73.5" width="8" height="6" fill="none" stroke="#eee" stroke-width="1.1"/><path d="M17 76.5L21 74V79Z" fill="none" stroke="#eee" stroke-width="1"/><path d="M8.5 95.5H18.5L21 108.5H6Z" fill="none" stroke="#eee" stroke-width="1.1"/><path d="M7.5 99.5H19.5M6.8 104H20.2M11.7 95.5L10.8 108.5M15.3 95.5L16.2 108.5" stroke="#eee" stroke-width="1"/></svg>
<div class="a" style="left:3.0px;top:687.0px;width:1189.0px;height:47.6px;background:#1f1f1f;border-radius:6px;box-shadow:inset 0 0 0 1px #2a2a2a;"></div>
<div class="a" style="left:3.0px;top:687.0px;width:1189.0px;height:26.0px;background:#323232;border-radius:6px 6px 0 0;"></div>
<div class="a" style="left:11.5px;top:691.0px;width:30.5px;height:18.2px;background:#282828;border-radius:4px;box-sizing:border-box;border:1px solid #363636;"></div>
<svg class="a" style="left:12px;top:691px;" width="32" height="18" viewBox="0 0 32 18"><circle cx="9.5" cy="8.6" r="6.8" fill="#eee"/><path d="M10.8 5L7.5 8.6L10.8 12.2" fill="none" stroke="#222" stroke-width="1.7"/><path d="M19.5 8L22 10.5L24.5 8" fill="none" stroke="#ddd" stroke-width="1.1"/></svg>
<div class="t" style="left:55.3px;top:689.8px;height:20px;line-height:20px;font-size:11px;color:#d0d0d0;">视图</div>
<div class="t" style="left:92.0px;top:689.8px;height:20px;line-height:20px;font-size:11px;color:#d0d0d0;">标记</div>
<div class="a" style="left:128.3px;top:691.0px;width:44.9px;height:18.2px;background:#282828;border-radius:4px;box-sizing:border-box;border:1px solid #363636;"></div>
<div class="t" style="left:134.5px;top:689.8px;height:20px;line-height:20px;font-size:11px;color:#e0e0e0;">回放</div>
<svg class="a" style="left:160px;top:694px;" width="12" height="12" viewBox="0 0 12 12"><path d="M3.3 5.0 L6.3 8.3 L9.3 5.0" fill="none" stroke="#cfcfcf" stroke-width="1.2"/></svg>
<div class="a" style="left:449.6px;top:691.0px;width:19.3px;height:18.0px;background:#4a4a4a;border-radius:4px 0 0 4px;"></div>
<div class="a" style="left:468.9px;top:691.0px;width:17.9px;height:18.0px;background:#2c2c2c;border-radius:0 4px 4px 0;"></div>
<svg class="a" style="left:449px;top:691px;" width="38" height="18" viewBox="0 0 38 18"><circle cx="10" cy="9" r="4.8" fill="none" stroke="#ccc" stroke-width="1"/><path d="M27 8L29 10L31 8" fill="none" stroke="#666" stroke-width="1"/></svg>
<div class="a" style="left:494.8px;top:691.0px;width:117.6px;height:18.0px;background:#4a4a4a;border-radius:4px;"></div>
<div class="a" style="left:514.4px;top:691.0px;width:1.0px;height:18.0px;background:#3e3e3e;"></div>
<div class="a" style="left:534.0px;top:691.0px;width:1.0px;height:18.0px;background:#3e3e3e;"></div>
<div class="a" style="left:553.6px;top:691.0px;width:1.0px;height:18.0px;background:#3e3e3e;"></div>
<div class="a" style="left:573.2px;top:691.0px;width:1.0px;height:18.0px;background:#3e3e3e;"></div>
<div class="a" style="left:592.8px;top:691.0px;width:1.0px;height:18.0px;background:#3e3e3e;"></div>
<svg class="a" style="left:494px;top:691px;" width="120" height="18" viewBox="0 0 120 18"><path d="M6 4.5V13.5" stroke="#eee" stroke-width="1.6"/><path d="M14.5 4.5L8 9L14.5 13.5Z" fill="#eee"/><path d="M25.5 5L29.5 9L25.5 13L21.5 9ZM36.5 5V13L31.5 9Z" fill="#eee"/><path d="M49.5 4L42 9L49.5 14Z" fill="#eee"/><path d="M64 4L71.5 9L64 14Z" fill="#eee"/><path d="M81.5 5V13L86.5 9ZM92.5 5L96.5 9L92.5 13L88.5 9Z" fill="#eee"/><path d="M112.5 4.5V13.5" stroke="#eee" stroke-width="1.6"/><path d="M104 4.5L110.5 9L104 13.5Z" fill="#eee"/></svg>
<div class="a" style="left:620.0px;top:691.0px;width:38.3px;height:18.0px;background:#4a4a4a;border-radius:4px 0 0 4px;"></div>
<div class="a" style="left:638.9px;top:691.0px;width:1.0px;height:18.0px;background:#3e3e3e;"></div>
<div class="a" style="left:658.3px;top:691.0px;width:18.9px;height:18.0px;background:#232323;border-radius:0 4px 4px 0;"></div>
<svg class="a" style="left:620px;top:691px;" width="40" height="18" viewBox="0 0 40 18"><path d="M11 5L5 9L11 13ZM13.5 5V13" fill="#eee" stroke="#eee" stroke-width="0.6"/><path d="M25.5 5V13M28 5L34 9L28 13Z" fill="#eee" stroke="#eee" stroke-width="0.6"/></svg>
<svg class="a" style="left:661px;top:694px;" width="12" height="12" viewBox="0 0 12 12"><path d="M3.7 5.0 L6.7 8.3 L9.7 5.0" fill="none" stroke="#cfcfcf" stroke-width="1.2"/></svg>
<div class="a" style="left:684.8px;top:691.0px;width:19.3px;height:18.0px;background:#4a4a4a;border-radius:4px 0 0 4px;"></div>
<div class="a" style="left:704.1px;top:691.0px;width:17.9px;height:18.0px;background:#2c2c2c;border-radius:0 4px 4px 0;"></div>
<svg class="a" style="left:685px;top:691px;" width="20" height="18" viewBox="0 0 20 18"><path d="M4.5 12V8.5A5 5 0 0 1 14.5 8.5V12M7 12V8.5A2.5 2.5 0 0 1 12 8.5V12" fill="none" stroke="#ddd" stroke-width="1"/><path d="M3.5 14.5H15.5" stroke="#ddd" stroke-width="1"/></svg>
<svg class="a" style="left:707px;top:694px;" width="12" height="12" viewBox="0 0 12 12"><path d="M3.0 5.0 L6.0 8.3 L9.0 5.0" fill="none" stroke="#cfcfcf" stroke-width="1.2"/></svg>
<div class="a" style="left:855.1px;top:690.9px;width:72.7px;height:18.3px;background:#4a4a4a;border-radius:4px;"></div>
<div class="t" style="left:691.5px;width:400px;text-align:center;top:690.5px;height:20px;line-height:20px;font-size:11px;color:#e0e0e0;">1</div>
<div class="a" style="left:935.1px;top:690.9px;width:191.5px;height:18.3px;background:#4a4a4a;border-radius:4px;"></div>
<div class="a" style="left:935.1px;top:690.9px;width:18.3px;height:18.3px;background:#3c3c3c;border-radius:4px 0 0 4px;"></div>
<div class="a" style="left:1040.5px;top:690.9px;width:1.0px;height:18.3px;background:#3a3a3a;"></div>
<svg class="a" style="left:935px;top:691px;" width="19" height="18" viewBox="0 0 19 18"><circle cx="9.5" cy="10" r="5" fill="none" stroke="#ddd" stroke-width="1.1"/><path d="M9.5 10V7M8 3.5H11M13.5 5L14.5 6" stroke="#ddd" stroke-width="1.1"/></svg>
<div class="t" style="left:968.8px;top:690.5px;height:20px;line-height:20px;font-size:11px;color:#e0e0e0;">起始</div>
<div class="t" style="right:428.0px;top:690.5px;height:20px;line-height:20px;font-size:11px;color:#e0e0e0;">1</div>
<div class="t" style="left:1056.0px;top:690.5px;height:20px;line-height:20px;font-size:11px;color:#e0e0e0;">结束</div>
<div class="t" style="right:341.5px;top:690.5px;height:20px;line-height:20px;font-size:11px;color:#e0e0e0;">250</div>
<div class="a" style="left:1145.0px;top:691.0px;width:18.3px;height:18.0px;background:#4772b3;border-radius:4px 0 0 4px;"></div>
<div class="a" style="left:1163.3px;top:691.0px;width:19.5px;height:18.0px;background:#282828;border-radius:0 4px 4px 0;"></div>
<svg class="a" style="left:1145px;top:691px;" width="19" height="18" viewBox="0 0 19 18"><circle cx="10.5" cy="7.5" r="4.8" fill="#e8e8e8"/><path d="M5.5 8A5 5 0 0 0 12 15" fill="none" stroke="#eee" stroke-width="1.1"/></svg>
<svg class="a" style="left:1167px;top:694px;" width="12" height="12" viewBox="0 0 12 12"><path d="M3.0 5.0 L6.0 8.3 L9.0 5.0" fill="none" stroke="#cfcfcf" stroke-width="1.2"/></svg>
<div class="a" style="left:36.3px;top:715.0px;width:22.6px;height:18.4px;background:#4772b3;border-radius:4px;"></div>
<div class="t" style="left:-152.4px;width:400px;text-align:center;top:715.0px;height:20px;line-height:20px;font-size:12px;color:#ffffff;font-weight:bold;">1</div>
<div class="t" style="left:-103.9px;width:400px;text-align:center;top:715.0px;height:20px;line-height:20px;font-size:12px;color:#a8a8a8;">12</div>
<div class="t" style="left:-50.9px;width:400px;text-align:center;top:715.0px;height:20px;line-height:20px;font-size:12px;color:#a8a8a8;">24</div>
<div class="t" style="left:2.2px;width:400px;text-align:center;top:715.0px;height:20px;line-height:20px;font-size:12px;color:#a8a8a8;">36</div>
<div class="t" style="left:55.2px;width:400px;text-align:center;top:715.0px;height:20px;line-height:20px;font-size:12px;color:#a8a8a8;">48</div>
<div class="t" style="left:108.3px;width:400px;text-align:center;top:715.0px;height:20px;line-height:20px;font-size:12px;color:#a8a8a8;">60</div>
<div class="t" style="left:161.3px;width:400px;text-align:center;top:715.0px;height:20px;line-height:20px;font-size:12px;color:#a8a8a8;">72</div>
<div class="t" style="left:214.3px;width:400px;text-align:center;top:715.0px;height:20px;line-height:20px;font-size:12px;color:#a8a8a8;">84</div>
<div class="t" style="left:267.4px;width:400px;text-align:center;top:715.0px;height:20px;line-height:20px;font-size:12px;color:#a8a8a8;">96</div>
<div class="t" style="left:320.4px;width:400px;text-align:center;top:715.0px;height:20px;line-height:20px;font-size:12px;color:#a8a8a8;">108</div>
<div class="t" style="left:373.5px;width:400px;text-align:center;top:715.0px;height:20px;line-height:20px;font-size:12px;color:#a8a8a8;">120</div>
<div class="t" style="left:426.5px;width:400px;text-align:center;top:715.0px;height:20px;line-height:20px;font-size:12px;color:#a8a8a8;">132</div>
<div class="t" style="left:479.5px;width:400px;text-align:center;top:715.0px;height:20px;line-height:20px;font-size:12px;color:#a8a8a8;">144</div>
<div class="t" style="left:532.6px;width:400px;text-align:center;top:715.0px;height:20px;line-height:20px;font-size:12px;color:#a8a8a8;">156</div>
<div class="t" style="left:585.6px;width:400px;text-align:center;top:715.0px;height:20px;line-height:20px;font-size:12px;color:#a8a8a8;">168</div>
<div class="t" style="left:638.7px;width:400px;text-align:center;top:715.0px;height:20px;line-height:20px;font-size:12px;color:#a8a8a8;">180</div>
<div class="t" style="left:691.7px;width:400px;text-align:center;top:715.0px;height:20px;line-height:20px;font-size:12px;color:#a8a8a8;">192</div>
<div class="t" style="left:744.7px;width:400px;text-align:center;top:715.0px;height:20px;line-height:20px;font-size:12px;color:#a8a8a8;">204</div>
<div class="t" style="left:797.8px;width:400px;text-align:center;top:715.0px;height:20px;line-height:20px;font-size:12px;color:#a8a8a8;">216</div>
<div class="t" style="left:850.8px;width:400px;text-align:center;top:715.0px;height:20px;line-height:20px;font-size:12px;color:#a8a8a8;">228</div>
<div class="t" style="left:903.9px;width:400px;text-align:center;top:715.0px;height:20px;line-height:20px;font-size:12px;color:#a8a8a8;">240</div>
<div class="t" style="left:956.9px;width:400px;text-align:center;top:715.0px;height:20px;line-height:20px;font-size:12px;color:#a8a8a8;">252</div>
<svg class="a" style="left:1385px;top:737px;" width="22" height="20" viewBox="0 0 22 20"><circle cx="10" cy="10" r="6.5" fill="none" stroke="#888" stroke-width="1"/><path d="M3.5 10H16.5M10 3.5C6 7 6 13 10 16.5M10 3.5C14 7 14 13 10 16.5M4 4L16 16" fill="none" stroke="#888" stroke-width="1"/></svg>
<div class="a" style="left:1410.0px;top:741.0px;width:1.0px;height:13.0px;background:#888;"></div>
<div class="t" style="left:1415.4px;top:738.1px;height:20px;line-height:20px;font-size:12px;color:#a8a8a8;">5.1.0</div>
<div class="a" style="left:1195.3px;top:57.0px;width:256.7px;height:122.0px;background:#282828;border-radius:6px;box-shadow:inset 0 0 0 1px #333;"></div>
<div class="a" style="left:1204.6px;top:59.6px;width:30.9px;height:19.1px;background:#282828;border-radius:4px;box-sizing:border-box;border:1px solid #363636;"></div>
<svg class="a" style="left:1205px;top:60px;" width="30" height="18" viewBox="0 0 30 18"><rect x="3.5" y="3" width="4" height="2.5" fill="#ddd"/><path d="M5 5.5V13.5H8" fill="none" stroke="#ddd"/><rect x="8" y="7.5" width="6" height="2.5" fill="#ddd"/><rect x="8" y="11.5" width="6" height="2.5" fill="#ddd"/><path d="M19 8L21.5 10.5L24 8" fill="none" stroke="#ddd" stroke-width="1.1"/></svg>
<div class="a" style="left:1241.4px;top:59.6px;width:31.5px;height:19.1px;background:#282828;border-radius:4px;box-sizing:border-box;border:1px solid #363636;"></div>
<svg class="a" style="left:1242px;top:60px;" width="30" height="18" viewBox="0 0 30 18"><rect x="6.5" y="3.5" width="9" height="8" fill="none" stroke="#ddd" stroke-width="1.1"/><path d="M4.5 5.5V13.5H13.5M2.5 7.5V15.5H11.5" fill="none" stroke="#ddd" stroke-width="0.9"/><path d="M8 10L10.5 6.5L13 10Z" fill="#ddd"/><path d="M20 8L22.5 10.5L25 8" fill="none" stroke="#ddd" stroke-width="1.1"/></svg>
<div class="a" style="left:1289.8px;top:59.6px;width:117.9px;height:19.1px;background:#1d1d1d;border-radius:5px;box-sizing:border-box;border:1px solid #333;"></div>
<svg class="a" style="left:1293px;top:60px;" width="18" height="18" viewBox="0 0 18 18"><circle cx="8" cy="8" r="4.3" fill="none" stroke="#ddd" stroke-width="1.1"/><path d="M11 11L15 15" stroke="#ddd" stroke-width="1.3"/></svg>
<div class="t" style="left:1314.0px;top:59.5px;height:20px;line-height:20px;font-size:11.5px;color:#808080;">搜索</div>
<div class="a" style="left:1424.0px;top:59.6px;width:28.0px;height:19.1px;background:#282828;border-radius:4px 0 0 4px;box-sizing:border-box;border:1px solid #363636;"></div>
<svg class="a" style="left:1424px;top:60px;" width="20" height="18" viewBox="0 0 20 18"><path d="M3.5 4H15.5L11 9.5V14.5L8 12.5V9.5Z" fill="none" stroke="#ddd" stroke-width="1.1"/></svg>
<svg class="a" style="left:1218px;top:84px;" width="16" height="16" viewBox="0 0 16 16"><g transform="translate(1,1)"><rect x="0.5" y="0.5" width="13" height="3" fill="#e6e6e6"/><rect x="1.5" y="4.5" width="11" height="8" fill="#e6e6e6"/><rect x="5" y="6.5" width="4" height="1.5" fill="#282828"/></g></svg>
<div class="t" style="left:1240.0px;top:82.5px;height:20px;line-height:20px;font-size:11px;color:#e0e0e0;">场景集合</div>
<svg class="a" style="left:1220px;top:105px;" width="14" height="14" viewBox="0 0 14 14"><path d="M2.5 5L7 9.5L11.5 5" fill="none" stroke="#bbb" stroke-width="1.1"/></svg>
<div class="a" style="left:1236.4px;top:103.3px;width:19.2px;height:17.3px;background:#3a3a3a;border-radius:4px;box-sizing:border-box;border:1px solid #4a4a4a;"></div>
<svg class="a" style="left:1239px;top:105px;" width="16" height="16" viewBox="0 0 16 16"><g transform="translate(1,1)"><rect x="0.5" y="0.5" width="13" height="3" fill="#e6e6e6"/><rect x="1.5" y="4.5" width="11" height="8" fill="#e6e6e6"/><rect x="5" y="6.5" width="4" height="1.5" fill="#3a3a3a"/></g></svg>
<div class="t" style="left:1260.0px;top:103.0px;height:20px;line-height:20px;font-size:12.5px;color:#eeeeee;">Collection</div>
<div class="a" style="left:1386.8px;top:106.8px;width:10.1px;height:10.1px;background:#e8e8e8;border-radius:2px;"></div>
<svg class="a" style="left:1386px;top:105px;" width="12" height="12" viewBox="0 0 12 12"><path d="M2.8 6.5L5 8.8L9.2 4.2" fill="none" stroke="#222" stroke-width="1.7"/></svg>
<svg class="a" style="left:0px;top:0px;" width="1455" height="190" viewBox="0 0 1455 190"><g transform="translate(1405.5,106)"><path d="M0.8 6C3.6 0.4 10.4 0.4 13.2 6C10.4 11.6 3.6 11.6 0.8 6Z" fill="none" stroke="#e8e8e8" stroke-width="1.6" stroke-linejoin="round"/><circle cx="7" cy="6" r="3" fill="#e8e8e8"/><circle cx="7" cy="6" r="1.9" fill="#282828"/><circle cx="7" cy="6" r="1" fill="#e8e8e8"/></g><g transform="translate(1426,105.5)"><rect x="0" y="2.2" width="13.2" height="9" rx="0.8" fill="#e8e8e8"/><path d="M3.5 2.5L4.8 0.3H8.6L9.8 2.5Z" fill="#e8e8e8"/><circle cx="6.6" cy="6.7" r="3" fill="none" stroke="#282828" stroke-width="1"/><circle cx="6.6" cy="6.7" r="1.3" fill="#282828"/></g><g transform="translate(1405.5,126)"><path d="M0.8 6C3.6 0.4 10.4 0.4 13.2 6C10.4 11.6 3.6 11.6 0.8 6Z" fill="none" stroke="#e8e8e8" stroke-width="1.6" stroke-linejoin="round"/><circle cx="7" cy="6" r="3" fill="#e8e8e8"/><circle cx="7" cy="6" r="1.9" fill="#282828"/><circle cx="7" cy="6" r="1" fill="#e8e8e8"/></g><g transform="translate(1426,125.5)"><rect x="0" y="2.2" width="13.2" height="9" rx="0.8" fill="#e8e8e8"/><path d="M3.5 2.5L4.8 0.3H8.6L9.8 2.5Z" fill="#e8e8e8"/><circle cx="6.6" cy="6.7" r="3" fill="none" stroke="#282828" stroke-width="1"/><circle cx="6.6" cy="6.7" r="1.3" fill="#282828"/></g><g transform="translate(1405.5,146)"><path d="M0.8 6C3.6 0.4 10.4 0.4 13.2 6C10.4 11.6 3.6 11.6 0.8 6Z" fill="none" stroke="#e8e8e8" stroke-width="1.6" stroke-linejoin="round"/><circle cx="7" cy="6" r="3" fill="#e8e8e8"/><circle cx="7" cy="6" r="1.9" fill="#282828"/><circle cx="7" cy="6" r="1" fill="#e8e8e8"/></g><g transform="translate(1426,145.5)"><rect x="0" y="2.2" width="13.2" height="9" rx="0.8" fill="#e8e8e8"/><path d="M3.5 2.5L4.8 0.3H8.6L9.8 2.5Z" fill="#e8e8e8"/><circle cx="6.6" cy="6.7" r="3" fill="none" stroke="#282828" stroke-width="1"/><circle cx="6.6" cy="6.7" r="1.3" fill="#282828"/></g><g transform="translate(1405.5,166)"><path d="M0.8 6C3.6 0.4 10.4 0.4 13.2 6C10.4 11.6 3.6 11.6 0.8 6Z" fill="none" stroke="#e8e8e8" stroke-width="1.6" stroke-linejoin="round"/><circle cx="7" cy="6" r="3" fill="#e8e8e8"/><circle cx="7" cy="6" r="1.9" fill="#282828"/><circle cx="7" cy="6" r="1" fill="#e8e8e8"/></g><g transform="translate(1426,165.5)"><rect x="0" y="2.2" width="13.2" height="9" rx="0.8" fill="#e8e8e8"/><path d="M3.5 2.5L4.8 0.3H8.6L9.8 2.5Z" fill="#e8e8e8"/><circle cx="6.6" cy="6.7" r="3" fill="none" stroke="#282828" stroke-width="1"/><circle cx="6.6" cy="6.7" r="1.3" fill="#282828"/></g></svg>
<div class="a" style="left:1224.5px;top:127.0px;width:1.0px;height:51.0px;background:#4a4a4a;"></div>
<svg class="a" style="left:1240px;top:125px;" width="14" height="14" viewBox="0 0 14 14"><path d="M5 3L9.5 7.5L5 12" fill="none" stroke="#bbb" stroke-width="1.1"/></svg>
<svg class="a" style="left:1240px;top:145px;" width="14" height="14" viewBox="0 0 14 14"><path d="M5 3L9.5 7.5L5 12" fill="none" stroke="#bbb" stroke-width="1.1"/></svg>
<svg class="a" style="left:1240px;top:165px;" width="14" height="14" viewBox="0 0 14 14"><path d="M5 3L9.5 7.5L5 12" fill="none" stroke="#bbb" stroke-width="1.1"/></svg>
<svg class="a" style="left:1256px;top:124px;" width="18" height="18" viewBox="0 0 18 18"><circle cx="5" cy="4.5" r="3.2" fill="#e38b4a"/><circle cx="11" cy="4.5" r="3.2" fill="#e38b4a"/><rect x="2" y="8" width="10" height="7" fill="#e38b4a"/><path d="M12 11L16 8.5V15Z" fill="#e38b4a"/></svg>
<div class="t" style="left:1280.2px;top:123.0px;height:20px;line-height:20px;font-size:12.5px;color:#d8d8d8;">Camera</div>
<div class="a" style="left:1340.3px;top:123.3px;width:19.5px;height:17.3px;background:#3f5a52;border-radius:4px;box-sizing:border-box;border:1px solid #555;"></div>
<svg class="a" style="left:1341px;top:124px;" width="18" height="17" viewBox="0 0 18 17"><circle cx="6" cy="5" r="2.6" fill="none" stroke="#5ccf9f" stroke-width="1"/><circle cx="11.5" cy="5" r="2.6" fill="none" stroke="#5ccf9f" stroke-width="1"/><rect x="3.5" y="9" width="8" height="5" fill="none" stroke="#5ccf9f" stroke-width="1"/><path d="M12 11.5L15 10V13Z" fill="none" stroke="#5ccf9f"/></svg>
<div class="a" style="left:1256.5px;top:143.3px;width:19.1px;height:17.3px;background:#4b5058;border-radius:4px;box-sizing:border-box;border:1px solid #5c6068;"></div>
<svg class="a" style="left:1257px;top:144px;" width="18" height="17" viewBox="0 0 18 17"><path d="M2.8 2.8H15.2L9 15Z" fill="#e38b4a"/><path d="M6.3 5.8H11.7L9 11.2Z" fill="#4b5058"/></svg>
<div class="t" style="left:1280.2px;top:143.0px;height:20px;line-height:20px;font-size:12.5px;color:#f0a040;">Cube</div>
<svg class="a" style="left:1331px;top:144px;" width="16" height="17" viewBox="0 0 16 17"><path d="M3 3.5H13L8 13.5Z" fill="none" stroke="#4ac59a" stroke-width="1.1"/><rect x="1.5" y="2" width="3" height="3" fill="#282828" stroke="#4ac59a"/><rect x="11.5" y="2" width="3" height="3" fill="#282828" stroke="#4ac59a"/><rect x="6.5" y="12" width="3" height="3" fill="#282828" stroke="#4ac59a"/></svg>
<svg class="a" style="left:1257px;top:164px;" width="18" height="17" viewBox="0 0 18 17"><circle cx="8" cy="6" r="4.8" fill="#e38b4a"/><rect x="5.5" y="10" width="5" height="4" fill="#e38b4a"/><path d="M6 5.5L8 8L10 5.5" fill="none" stroke="#282828" stroke-width="1"/></svg>
<div class="t" style="left:1280.2px;top:163.0px;height:20px;line-height:20px;font-size:12.5px;color:#d8d8d8;">Light</div>
<svg class="a" style="left:1331px;top:164px;" width="16" height="17" viewBox="0 0 16 17"><circle cx="7.5" cy="7" r="5.5" fill="none" stroke="#4ac59a" stroke-width="1.1" stroke-dasharray="6 2"/><circle cx="7.5" cy="7" r="1.3" fill="#4ac59a"/><path d="M7.5 8V16" stroke="#4ac59a" stroke-width="1" stroke-dasharray="1.5 1"/></svg>
<div class="a" style="left:1446.5px;top:88.0px;width:2.5px;height:69.0px;background:#3a3a3a;border-radius:2px;"></div>
<div class="a" style="left:1195.3px;top:182.5px;width:257.0px;height:552.3px;background:#2b2b2b;border-radius:6px;box-shadow:inset 0 0 0 1px #353535;"></div>
<div class="a" style="left:1205.5px;top:185.5px;width:29.1px;height:18.5px;background:#282828;border-radius:4px;box-sizing:border-box;border:1px solid #363636;"></div>
<svg class="a" style="left:1206px;top:186px;" width="30" height="18" viewBox="0 0 30 18"><rect x="3" y="2.5" width="12" height="5.5" rx="2.75" fill="#e6e6e6"/><rect x="3" y="10" width="12" height="5.5" rx="2.75" fill="#e6e6e6"/><circle cx="12.2" cy="5.25" r="1.9" fill="#2b2b2b"/><circle cx="12.2" cy="12.75" r="1.9" fill="#2b2b2b"/><path d="M20 8L22.5 10.5L25 8" fill="none" stroke="#ddd" stroke-width="1.1"/></svg>
<div class="a" style="left:1264.7px;top:185.8px;width:117.5px;height:18.2px;background:#1d1d1d;border-radius:5px;box-sizing:border-box;border:1px solid #333;"></div>
<svg class="a" style="left:1268px;top:186px;" width="18" height="18" viewBox="0 0 18 18"><circle cx="8" cy="8" r="4.3" fill="none" stroke="#ddd" stroke-width="1.1"/><path d="M11 11L15 15" stroke="#ddd" stroke-width="1.3"/></svg>
<div class="t" style="left:1290.0px;top:185.5px;height:20px;line-height:20px;font-size:11.5px;color:#808080;">搜索</div>
<div class="a" style="left:1425.0px;top:185.8px;width:18.2px;height:18.2px;background:#282828;border-radius:4px;box-sizing:border-box;border:1px solid #363636;"></div>
<svg class="a" style="left:1428px;top:189px;" width="12" height="12" viewBox="0 0 12 12"><path d="M3.0 5.0 L6.0 8.3 L9.0 5.0" fill="none" stroke="#cfcfcf" stroke-width="1.2"/></svg>
<div class="a" style="left:1196.4px;top:209.0px;width:27.3px;height:524.8px;background:#1f1f1f;border-radius:0 0 0 6px;"></div>
<div class="a" style="left:1198.0px;top:209.0px;width:25.7px;height:36.6px;background:#232323;"></div>
<div class="a" style="left:1198.0px;top:438.0px;width:26.0px;height:26.0px;background:#333333;border-radius:4px 0 0 4px;"></div>
<svg class="a" style="left:0px;top:0px;" width="1455" height="759" viewBox="0 0 1455 759"><g transform="translate(1203,221)"><path d="M3 1V6M2 8.5A1.8 1.8 0 0 0 5 8.5V6.5H2Z" stroke="#ddd" fill="#ddd" stroke-width="1"/><path d="M10.5 1.5A2.5 2.5 0 1 0 13.5 1.5V3.5H12V1.5M12 5V12" fill="none" stroke="#ddd" stroke-width="1.4"/></g><g transform="translate(1203,258)"><rect x="1.5" y="3.5" width="13" height="9" fill="none" stroke="#ddd" stroke-width="1.2"/><path d="M4 6.5H12M4 9.5H12" stroke="#ddd"/><rect x="4" y="1" width="4" height="2" fill="#ddd"/></g><g transform="translate(1203,287)"><rect x="1.5" y="1.5" width="13" height="3" fill="#ddd"/><rect x="3.5" y="5.5" width="9" height="8" fill="none" stroke="#ddd"/><path d="M5 12L8 8L11 12Z" fill="#ddd"/></g><g transform="translate(1203,314)"><rect x="5.5" y="1.5" width="9" height="9" fill="#ddd"/><path d="M3.5 3.5V12.5H12.5M1.5 5.5V14.5H10.5" fill="none" stroke="#ddd" stroke-width="0.9"/><path d="M7 9L10 5L13 9Z" fill="#444"/></g><g transform="translate(1203,342)"><path d="M5.5 2L2 8.5A3.5 3.5 0 0 0 9 8.5Z" fill="#ddd"/><circle cx="11.5" cy="3.5" r="1.8" fill="#ddd"/><circle cx="11" cy="11" r="3" fill="#2b2b2b" stroke="#ddd" stroke-width="1"/></g><g transform="translate(1203,370)"><circle cx="8" cy="8.5" r="6" fill="#c04a5f"/><path d="M4 6C6 6 6 9 8 9S8 13 6 13M10 3C10 5 12 5 13 6" stroke="#1f1f1f" stroke-width="1.5" fill="none"/></g><g transform="translate(1203,406)"><rect x="2" y="1.5" width="12" height="3" fill="none" stroke="#ddd" stroke-width="1.1"/><rect x="3" y="5.5" width="10" height="8" fill="none" stroke="#ddd" stroke-width="1.1"/><rect x="6.5" y="7" width="3" height="1.2" fill="#ddd"/></g><g transform="translate(1203,443)"><path d="M2 5V2H5M11 2H14V5M14 11V14H11M5 14H2V11" fill="none" stroke="#f2a65a" stroke-width="1"/><rect x="4" y="4" width="8" height="8" fill="#f2a65a"/></g><g transform="translate(1203,471)"><path d="M3 13L9 7" stroke="#6b9be0" stroke-width="2.6"/><path d="M13.5 2.5A3.5 3.5 0 1 0 13.5 6.5L11.5 5.5V3.5Z" fill="#6b9be0"/></g><g transform="translate(1203,499)"><circle cx="3.5" cy="3.5" r="2.3" fill="#6b9be0"/><circle cx="3.5" cy="13" r="1.5" fill="#6b9be0"/><circle cx="13" cy="13" r="1.5" fill="#6b9be0"/><path d="M3.5 4V13M4 4L13 13M4 3.5H13L11 2" fill="none" stroke="#6b9be0" stroke-width="1"/></g><g transform="translate(1203,527)"><circle cx="8" cy="8" r="5.5" fill="none" stroke="#6b9be0" stroke-width="1.2"/><circle cx="8" cy="8" r="2.3" fill="#6b9be0"/><circle cx="12.5" cy="3.5" r="2" fill="#6b9be0"/></g><g transform="translate(1203,555)"><path d="M2 9A5 5 0 0 0 12 12L15 3L6 4A5 5 0 0 0 2 9Z" fill="none" stroke="#6b9be0" stroke-width="1.2"/><circle cx="7" cy="9" r="2" fill="#6b9be0"/></g><g transform="translate(1203,582)"><path d="M2.5 3.5H13.5L8 13Z" fill="none" stroke="#4ac59a" stroke-width="1.2"/><rect x="1" y="2" width="3" height="3" fill="#1f1f1f" stroke="#4ac59a"/><rect x="12" y="2" width="3" height="3" fill="#1f1f1f" stroke="#4ac59a"/><rect x="6.5" y="11.5" width="3" height="3" fill="#1f1f1f" stroke="#4ac59a"/></g><g transform="translate(1203,610)"><circle cx="8" cy="8.5" r="6" fill="#c96b75"/><path d="M8 2.5V8.5H14A6 6 0 0 0 8 2.5ZM8 8.5H2A6 6 0 0 0 8 14.5Z" fill="#3a2a2c"/></g><g transform="translate(1203,645)"><path d="M5 4L8 7L11 4" fill="none" stroke="#555" stroke-width="1"/></g></svg>
<svg class="a" style="left:1234px;top:219px;" width="16" height="16" viewBox="0 0 16 16"><path d="M1.5 4.5V1.5H4.5M11.5 1.5H14.5V4.5M14.5 11.5V14.5H11.5M4.5 14.5H1.5V11.5" fill="none" stroke="#ddd" stroke-width="1"/><rect x="4" y="4" width="8" height="8" fill="#e6e6e6"/></svg>
<div class="t" style="left:1258.3px;top:217.5px;height:20px;line-height:20px;font-size:12.5px;color:#e0e0e0;">Cube</div>
<svg class="a" style="left:1426px;top:219px;" width="16" height="16" viewBox="0 0 16 16"><path d="M1.5 14.5L6 10M5 6L10 11M7.5 2.5L13.5 8.5L11.5 9.5L9.5 12.5L3.5 6.5L6.5 4.5Z" fill="none" stroke="#999" stroke-width="1"/></svg>
<div class="a" style="left:1232.8px;top:253.8px;width:210.4px;height:18.7px;background:#1e1e1e;border-radius:4px;box-sizing:border-box;border:1px solid #3a3a3a;"></div>
<div class="a" style="left:1233.8px;top:254.8px;width:30.0px;height:16.7px;background:#2b2b2b;border-radius:3px 0 0 3px;"></div>
<svg class="a" style="left:1236px;top:255px;" width="30" height="17" viewBox="0 0 30 17"><path d="M1.5 4.5V1.5H4.5M10.5 1.5H13.5V4.5M13.5 10.5V13.5H10.5M4.5 13.5H1.5V10.5" fill="none" stroke="#ddd" stroke-width="1"/><rect x="4" y="4" width="7" height="7" fill="#e6e6e6"/><path d="M17 7L19.5 9.5L22 7" fill="none" stroke="#ddd" stroke-width="1.1"/></svg>
<div class="t" style="left:1271.0px;top:253.5px;height:20px;line-height:20px;font-size:12.5px;color:#e0e0e0;">Cube</div>
<div class="a" style="left:1232.3px;top:282.9px;width:211.8px;height:280.5px;background:#3b3b3b;border-radius:5px;box-shadow:inset 0 0 0 1px #444;"></div>
<svg class="a" style="left:1240px;top:289px;" width="14" height="14" viewBox="0 0 14 14"><path d="M2.5 5L7 9.5L11.5 5" fill="none" stroke="#ddd" stroke-width="1.1"/></svg>
<div class="t" style="left:1253.8px;top:287.1px;height:20px;line-height:20px;font-size:11px;color:#e0e0e0;">变换</div>
<svg class="a" style="left:1424px;top:294px;" width="12" height="5" viewBox="0 0 12 5"><rect x="0" y="0" width="1" height="1" fill="#777"/><rect x="0" y="3" width="1" height="1" fill="#777"/><rect x="3" y="0" width="1" height="1" fill="#777"/><rect x="3" y="3" width="1" height="1" fill="#777"/><rect x="6" y="0" width="1" height="1" fill="#777"/><rect x="6" y="3" width="1" height="1" fill="#777"/><rect x="9" y="0" width="1" height="1" fill="#777"/><rect x="9" y="3" width="1" height="1" fill="#777"/></svg>
<div class="a" style="left:1316.3px;top:317.2px;width:78.4px;height:18.0px;background:#545454;border-radius:4px 4px 0 0;"></div>
<div class="t" style="left:1155.5px;width:400px;text-align:center;top:316.8px;height:20px;line-height:20px;font-size:12px;color:#e0e0e0;">0 m</div>
<div class="t" style="right:149.7px;top:316.8px;height:20px;line-height:20px;font-size:11px;color:#d8d8d8;">位置 X</div>
<div class="a" style="left:1316.3px;top:336.0px;width:78.4px;height:18.7px;background:#545454;border-radius:0;"></div>
<div class="t" style="left:1155.5px;width:400px;text-align:center;top:335.9px;height:20px;line-height:20px;font-size:12px;color:#e0e0e0;">0 m</div>
<div class="t" style="right:149.7px;top:335.9px;height:20px;line-height:20px;font-size:11px;color:#d8d8d8;">Y</div>
<div class="a" style="left:1316.3px;top:355.5px;width:78.4px;height:18.7px;background:#545454;border-radius:0 0 4px 4px;"></div>
<div class="t" style="left:1155.5px;width:400px;text-align:center;top:355.4px;height:20px;line-height:20px;font-size:12px;color:#e0e0e0;">0 m</div>
<div class="t" style="right:149.7px;top:355.4px;height:20px;line-height:20px;font-size:11px;color:#d8d8d8;">Z</div>
<div class="a" style="left:1316.3px;top:382.0px;width:78.4px;height:17.7px;background:#545454;border-radius:4px 4px 0 0;"></div>
<div class="t" style="left:1155.5px;width:400px;text-align:center;top:381.4px;height:20px;line-height:20px;font-size:12px;color:#e0e0e0;">0°</div>
<div class="t" style="right:149.7px;top:381.4px;height:20px;line-height:20px;font-size:11px;color:#d8d8d8;">旋转 X</div>
<div class="a" style="left:1316.3px;top:400.5px;width:78.4px;height:18.7px;background:#545454;border-radius:0;"></div>
<div class="t" style="left:1155.5px;width:400px;text-align:center;top:400.4px;height:20px;line-height:20px;font-size:12px;color:#e0e0e0;">0°</div>
<div class="t" style="right:149.7px;top:400.4px;height:20px;line-height:20px;font-size:11px;color:#d8d8d8;">Y</div>
<div class="a" style="left:1316.3px;top:420.0px;width:78.4px;height:18.5px;background:#545454;border-radius:0 0 4px 4px;"></div>
<div class="t" style="left:1155.5px;width:400px;text-align:center;top:419.8px;height:20px;line-height:20px;font-size:12px;color:#e0e0e0;">0°</div>
<div class="t" style="right:149.7px;top:419.8px;height:20px;line-height:20px;font-size:11px;color:#d8d8d8;">Z</div>
<div class="a" style="left:1316.3px;top:471.9px;width:78.4px;height:18.1px;background:#545454;border-radius:4px 4px 0 0;"></div>
<div class="t" style="left:1155.5px;width:400px;text-align:center;top:471.6px;height:20px;line-height:20px;font-size:12px;color:#e0e0e0;">1.000</div>
<div class="t" style="right:149.7px;top:471.6px;height:20px;line-height:20px;font-size:11px;color:#d8d8d8;">缩放 X</div>
<div class="a" style="left:1316.3px;top:490.8px;width:78.4px;height:18.9px;background:#545454;border-radius:0;"></div>
<div class="t" style="left:1155.5px;width:400px;text-align:center;top:490.8px;height:20px;line-height:20px;font-size:12px;color:#e0e0e0;">1.000</div>
<div class="t" style="right:149.7px;top:490.8px;height:20px;line-height:20px;font-size:11px;color:#d8d8d8;">Y</div>
<div class="a" style="left:1316.3px;top:510.5px;width:78.4px;height:19.1px;background:#545454;border-radius:0 0 4px 4px;"></div>
<div class="t" style="left:1155.5px;width:400px;text-align:center;top:510.7px;height:20px;line-height:20px;font-size:12px;color:#e0e0e0;">1.000</div>
<div class="t" style="right:149.7px;top:510.7px;height:20px;line-height:20px;font-size:11px;color:#d8d8d8;">Z</div>
<svg class="a" style="left:0px;top:0px;" width="1455" height="759" viewBox="0 0 1455 759"><g transform="translate(1400,318.6)"><path d="M4 8V5A3 3 0 0 1 10 5" fill="none" stroke="#bbb" stroke-width="1.1"/><rect x="2.5" y="8.5" width="9" height="7" fill="none" stroke="#bbb" stroke-width="1.1"/><rect x="6" y="11" width="2" height="2" fill="#bbb"/></g><circle cx="1426" cy="326.6" r="2" fill="#e0e0e0"/><g transform="translate(1400,337.75)"><path d="M4 8V5A3 3 0 0 1 10 5" fill="none" stroke="#bbb" stroke-width="1.1"/><rect x="2.5" y="8.5" width="9" height="7" fill="none" stroke="#bbb" stroke-width="1.1"/><rect x="6" y="11" width="2" height="2" fill="#bbb"/></g><circle cx="1426" cy="345.8" r="2" fill="#e0e0e0"/><g transform="translate(1400,357.25)"><path d="M4 8V5A3 3 0 0 1 10 5" fill="none" stroke="#bbb" stroke-width="1.1"/><rect x="2.5" y="8.5" width="9" height="7" fill="none" stroke="#bbb" stroke-width="1.1"/><rect x="6" y="11" width="2" height="2" fill="#bbb"/></g><circle cx="1426" cy="365.2" r="2" fill="#e0e0e0"/><g transform="translate(1400,383.25)"><path d="M4 8V5A3 3 0 0 1 10 5" fill="none" stroke="#bbb" stroke-width="1.1"/><rect x="2.5" y="8.5" width="9" height="7" fill="none" stroke="#bbb" stroke-width="1.1"/><rect x="6" y="11" width="2" height="2" fill="#bbb"/></g><circle cx="1426" cy="391.2" r="2" fill="#e0e0e0"/><g transform="translate(1400,402.25)"><path d="M4 8V5A3 3 0 0 1 10 5" fill="none" stroke="#bbb" stroke-width="1.1"/><rect x="2.5" y="8.5" width="9" height="7" fill="none" stroke="#bbb" stroke-width="1.1"/><rect x="6" y="11" width="2" height="2" fill="#bbb"/></g><circle cx="1426" cy="410.2" r="2" fill="#e0e0e0"/><g transform="translate(1400,421.65)"><path d="M4 8V5A3 3 0 0 1 10 5" fill="none" stroke="#bbb" stroke-width="1.1"/><rect x="2.5" y="8.5" width="9" height="7" fill="none" stroke="#bbb" stroke-width="1.1"/><rect x="6" y="11" width="2" height="2" fill="#bbb"/></g><circle cx="1426" cy="429.6" r="2" fill="#e0e0e0"/><g transform="translate(1400,473.35)"><path d="M4 8V5A3 3 0 0 1 10 5" fill="none" stroke="#bbb" stroke-width="1.1"/><rect x="2.5" y="8.5" width="9" height="7" fill="none" stroke="#bbb" stroke-width="1.1"/><rect x="6" y="11" width="2" height="2" fill="#bbb"/></g><circle cx="1426" cy="481.4" r="2" fill="#e0e0e0"/><g transform="translate(1400,492.65)"><path d="M4 8V5A3 3 0 0 1 10 5" fill="none" stroke="#bbb" stroke-width="1.1"/><rect x="2.5" y="8.5" width="9" height="7" fill="none" stroke="#bbb" stroke-width="1.1"/><rect x="6" y="11" width="2" height="2" fill="#bbb"/></g><circle cx="1426" cy="500.6" r="2" fill="#e0e0e0"/><g transform="translate(1400,512.45)"><path d="M4 8V5A3 3 0 0 1 10 5" fill="none" stroke="#bbb" stroke-width="1.1"/><rect x="2.5" y="8.5" width="9" height="7" fill="none" stroke="#bbb" stroke-width="1.1"/><rect x="6" y="11" width="2" height="2" fill="#bbb"/></g><circle cx="1426" cy="520.5" r="2" fill="#e0e0e0"/></svg>
<div class="a" style="left:1316.5px;top:447.4px;width:78.0px;height:17.2px;background:#282828;border-radius:4px;"></div>
<div class="t" style="left:1323.0px;top:446.5px;height:20px;line-height:20px;font-size:12px;color:#e0e0e0;">XYZ 欧拉</div>
<svg class="a" style="left:1381px;top:450px;" width="12" height="12" viewBox="0 0 12 12"><path d="M3.0 5.0 L6.0 8.3 L9.0 5.0" fill="none" stroke="#cfcfcf" stroke-width="1.2"/></svg>
<div class="t" style="right:149.7px;top:446.2px;height:20px;line-height:20px;font-size:11px;color:#d8d8d8;">模式</div>
<svg class="a" style="left:0px;top:0px;" width="1455" height="759" viewBox="0 0 1455 759"><circle cx="1426" cy="455.7" r="2" fill="#e0e0e0"/></svg>
<svg class="a" style="left:1253px;top:545px;" width="12" height="12" viewBox="0 0 12 12"><path d="M4.5 2.5 L8.8 6.5 L4.5 10.5" fill="none" stroke="#cfcfcf" stroke-width="1.1"/></svg>
<div class="t" style="left:1268.0px;top:542.0px;height:20px;line-height:20px;font-size:11px;color:#e0e0e0;">增量变换</div>
<div class="a" style="left:1232.3px;top:566.4px;width:211.8px;height:24.0px;background:#3d3d3d;border-radius:5px;box-shadow:inset 0 0 0 1px #464646;"></div>
<svg class="a" style="left:1239px;top:572px;" width="12" height="12" viewBox="0 0 12 12"><path d="M4.5 2.4 L8.8 6.4 L4.5 10.4" fill="none" stroke="#cfcfcf" stroke-width="1.1"/></svg>
<div class="t" style="left:1254.3px;top:568.9px;height:20px;line-height:20px;font-size:11px;color:#e0e0e0;">关系</div>
<svg class="a" style="left:1424px;top:576px;" width="12" height="5" viewBox="0 0 12 5"><rect x="0" y="0" width="1" height="1" fill="#777"/><rect x="0" y="3" width="1" height="1" fill="#777"/><rect x="3" y="0" width="1" height="1" fill="#777"/><rect x="3" y="3" width="1" height="1" fill="#777"/><rect x="6" y="0" width="1" height="1" fill="#777"/><rect x="6" y="3" width="1" height="1" fill="#777"/><rect x="9" y="0" width="1" height="1" fill="#777"/><rect x="9" y="3" width="1" height="1" fill="#777"/></svg>
<div class="a" style="left:1232.3px;top:593.7px;width:211.8px;height:23.6px;background:#3d3d3d;border-radius:5px;box-shadow:inset 0 0 0 1px #464646;"></div>
<svg class="a" style="left:1239px;top:599px;" width="12" height="12" viewBox="0 0 12 12"><path d="M4.5 2.5 L8.8 6.5 L4.5 10.5" fill="none" stroke="#cfcfcf" stroke-width="1.1"/></svg>
<div class="t" style="left:1254.3px;top:596.0px;height:20px;line-height:20px;font-size:11px;color:#e0e0e0;">集合</div>
<svg class="a" style="left:1424px;top:603px;" width="12" height="5" viewBox="0 0 12 5"><rect x="0" y="0" width="1" height="1" fill="#777"/><rect x="0" y="3" width="1" height="1" fill="#777"/><rect x="3" y="0" width="1" height="1" fill="#777"/><rect x="3" y="3" width="1" height="1" fill="#777"/><rect x="6" y="0" width="1" height="1" fill="#777"/><rect x="6" y="3" width="1" height="1" fill="#777"/><rect x="9" y="0" width="1" height="1" fill="#777"/><rect x="9" y="3" width="1" height="1" fill="#777"/></svg>
<div class="a" style="left:1232.3px;top:619.8px;width:211.8px;height:24.4px;background:#3d3d3d;border-radius:5px;box-shadow:inset 0 0 0 1px #464646;"></div>
<svg class="a" style="left:1239px;top:626px;" width="12" height="12" viewBox="0 0 12 12"><path d="M4.5 2.0 L8.8 6.0 L4.5 10.0" fill="none" stroke="#cfcfcf" stroke-width="1.1"/></svg>
<div class="t" style="left:1254.3px;top:622.5px;height:20px;line-height:20px;font-size:11px;color:#e0e0e0;">实例化</div>
<svg class="a" style="left:1424px;top:630px;" width="12" height="5" viewBox="0 0 12 5"><rect x="0" y="0" width="1" height="1" fill="#777"/><rect x="0" y="3" width="1" height="1" fill="#777"/><rect x="3" y="0" width="1" height="1" fill="#777"/><rect x="3" y="3" width="1" height="1" fill="#777"/><rect x="6" y="0" width="1" height="1" fill="#777"/><rect x="6" y="3" width="1" height="1" fill="#777"/><rect x="9" y="0" width="1" height="1" fill="#777"/><rect x="9" y="3" width="1" height="1" fill="#777"/></svg>
<div class="a" style="left:1232.3px;top:647.2px;width:211.8px;height:24.4px;background:#3d3d3d;border-radius:5px;box-shadow:inset 0 0 0 1px #464646;"></div>
<svg class="a" style="left:1239px;top:653px;" width="12" height="12" viewBox="0 0 12 12"><path d="M4.5 2.4 L8.8 6.4 L4.5 10.4" fill="none" stroke="#cfcfcf" stroke-width="1.1"/></svg>
<div class="t" style="left:1254.3px;top:649.9px;height:20px;line-height:20px;font-size:11px;color:#e0e0e0;">运动路径</div>
<svg class="a" style="left:1424px;top:657px;" width="12" height="5" viewBox="0 0 12 5"><rect x="0" y="0" width="1" height="1" fill="#777"/><rect x="0" y="3" width="1" height="1" fill="#777"/><rect x="3" y="0" width="1" height="1" fill="#777"/><rect x="3" y="3" width="1" height="1" fill="#777"/><rect x="6" y="0" width="1" height="1" fill="#777"/><rect x="6" y="3" width="1" height="1" fill="#777"/><rect x="9" y="0" width="1" height="1" fill="#777"/><rect x="9" y="3" width="1" height="1" fill="#777"/></svg>
<div class="a" style="left:1232.3px;top:674.0px;width:211.8px;height:24.8px;background:#3d3d3d;border-radius:5px;box-shadow:inset 0 0 0 1px #464646;"></div>
<svg class="a" style="left:1239px;top:680px;" width="12" height="12" viewBox="0 0 12 12"><path d="M4.5 2.4 L8.8 6.4 L4.5 10.4" fill="none" stroke="#cfcfcf" stroke-width="1.1"/></svg>
<div class="t" style="left:1254.3px;top:676.9px;height:20px;line-height:20px;font-size:11px;color:#e0e0e0;">着色方式</div>
<svg class="a" style="left:1424px;top:684px;" width="12" height="5" viewBox="0 0 12 5"><rect x="0" y="0" width="1" height="1" fill="#777"/><rect x="0" y="3" width="1" height="1" fill="#777"/><rect x="3" y="0" width="1" height="1" fill="#777"/><rect x="3" y="3" width="1" height="1" fill="#777"/><rect x="6" y="0" width="1" height="1" fill="#777"/><rect x="6" y="3" width="1" height="1" fill="#777"/><rect x="9" y="0" width="1" height="1" fill="#777"/><rect x="9" y="3" width="1" height="1" fill="#777"/></svg>
<div class="a" style="left:1232.3px;top:700.8px;width:211.8px;height:24.8px;background:#3d3d3d;border-radius:5px;box-shadow:inset 0 0 0 1px #464646;"></div>
<svg class="a" style="left:1239px;top:707px;" width="12" height="12" viewBox="0 0 12 12"><path d="M4.5 2.2 L8.8 6.2 L4.5 10.2" fill="none" stroke="#cfcfcf" stroke-width="1.1"/></svg>
<div class="t" style="left:1254.3px;top:703.7px;height:20px;line-height:20px;font-size:11px;color:#e0e0e0;">可见性</div>
<svg class="a" style="left:1424px;top:711px;" width="12" height="5" viewBox="0 0 12 5"><rect x="0" y="0" width="1" height="1" fill="#777"/><rect x="0" y="3" width="1" height="1" fill="#777"/><rect x="3" y="0" width="1" height="1" fill="#777"/><rect x="3" y="3" width="1" height="1" fill="#777"/><rect x="6" y="0" width="1" height="1" fill="#777"/><rect x="6" y="3" width="1" height="1" fill="#777"/><rect x="9" y="0" width="1" height="1" fill="#777"/><rect x="9" y="3" width="1" height="1" fill="#777"/></svg>
<div class="a" style="left:1232.3px;top:728.0px;width:211.8px;height:6.2px;background:#3d3d3d;border-radius:5px 5px 0 0;box-shadow:inset 0 0 0 1px #464646;"></div>
<div class="a" style="left:1447.0px;top:215.0px;width:2.5px;height:475.0px;background:#3a3a3a;border-radius:2px;"></div>
</body></html>
